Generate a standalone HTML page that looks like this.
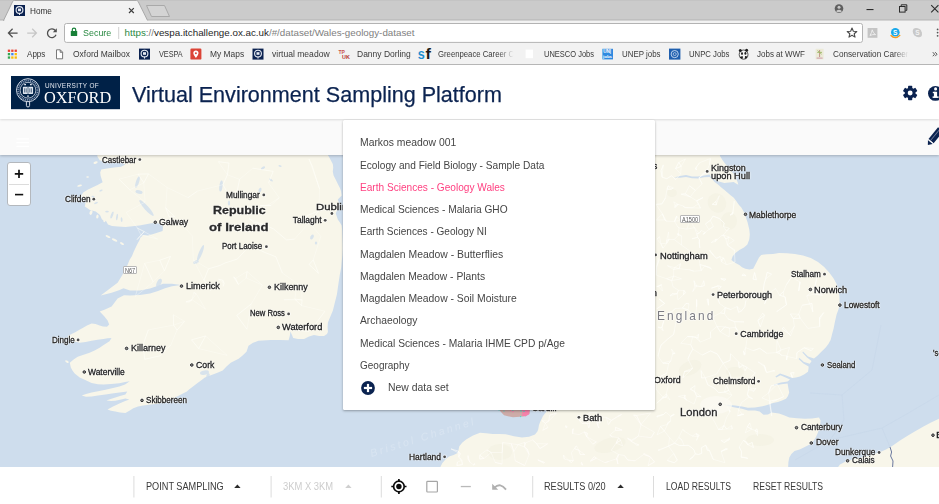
<!DOCTYPE html>
<html>
<head>
<meta charset="utf-8">
<title>Home</title>
<style>
*{box-sizing:border-box;margin:0;padding:0}
html,body{width:939px;height:504px;overflow:hidden;background:#fff;font-family:"Liberation Sans",sans-serif}
#root{position:relative;width:939px;height:504px;overflow:hidden}
.t{position:absolute;white-space:pre;line-height:1;transform-origin:0 0}
.a{position:absolute}
svg{position:absolute;overflow:visible}
</style>
</head>
<body>
<div id="root">
<svg width="939" height="312" viewBox="0 155 939 312" style="left:0;top:155px">
<rect x="0" y="155" width="939" height="312" fill="#cedded"/>
<g fill="#f8f6ea">
<path d="M96.5 150.0 L97.6 157.0 L100.0 160.6 L108.0 161.4 L116.0 162.2 L122.0 163.0 L125.4 164.6 L121.0 166.8 L114.0 167.6 L107.0 168.4 L101.3 169.4 L100.2 172.6 L100.6 175.8 L101.6 179.0 L102.6 182.3 L97.6 185.0 L92.3 187.4 L87.6 189.8 L83.2 192.6 L81.0 196.0 L85.8 201.6 L84.8 206.6 L90.0 210.0 L95.7 211.6 L100.0 215.0 L102.0 219.5 L106.0 221.0 L108.0 224.5 L112.0 226.0 L118.0 226.6 L125.5 227.0 L139.4 225.4 L150.0 223.6 L155.3 222.8 L160.0 223.8 L163.0 226.6 L162.6 231.0 L158.0 232.4 L153.3 234.0 L148.0 235.4 L143.4 235.0 L140.5 237.6 L139.3 240.5 L137.4 244.0 L135.7 247.6 L133.6 252.0 L132.0 256.0 L129.5 260.0 L127.5 264.9 L122.5 274.8 L117.6 282.7 L109.6 288.7 L100.7 295.6 L111.6 292.8 L119.0 290.2 L123.5 288.2 L130.0 290.6 L140.0 290.4 L150.0 288.6 L158.0 285.8 L163.0 283.8 L172.0 283.8 L181.0 285.0 L172.0 286.2 L165.0 288.2 L158.0 291.0 L150.0 293.4 L140.0 295.0 L130.0 295.4 L124.0 295.2 L117.6 298.6 L111.6 306.5 L105.0 309.5 L99.7 311.5 L104.0 316.0 L107.6 320.4 L109.2 324.6 L107.0 326.8 L103.0 326.6 L99.6 325.6 L95.6 324.0 L91.6 323.4 L87.0 325.6 L82.7 328.0 L79.0 330.0 L75.7 332.0 L71.6 334.0 L67.8 336.0 L68.6 338.4 L69.8 339.9 L74.6 341.6 L79.7 342.8 L85.6 341.9 L91.6 340.8 L97.6 339.8 L103.5 338.9 L107.6 338.2 L111.5 337.9 L109.5 341.2 L104.0 344.8 L99.6 347.8 L94.6 350.4 L89.6 352.8 L83.6 354.8 L77.7 356.7 L73.6 359.6 L69.8 362.7 L70.8 367.6 L72.6 370.8 L74.7 373.6 L79.7 377.6 L84.7 379.8 L91.6 383.0 L98.0 384.2 L103.5 384.4 L111.0 384.0 L119.4 383.2 L125.0 382.0 L129.8 381.2 L125.0 384.6 L119.4 386.6 L112.0 388.2 L105.5 389.7 L98.0 391.2 L91.6 392.6 L86.0 394.0 L81.7 395.6 L86.0 396.8 L91.6 396.6 L98.0 395.6 L105.5 394.6 L112.0 393.6 L119.4 392.6 L127.3 391.6 L125.4 394.4 L120.0 396.0 L115.4 397.4 L110.6 399.0 L106.5 400.6 L111.0 401.1 L115.4 400.7 L120.0 399.7 L125.4 398.4 L129.3 399.6 L124.0 401.6 L119.4 403.4 L113.0 406.4 L107.5 409.5 L111.0 410.8 L115.4 411.5 L120.0 412.4 L125.4 412.9 L129.4 410.8 L133.3 408.3 L138.0 406.4 L143.2 405.4 L151.0 404.6 L159.1 403.4 L167.0 400.6 L175.0 397.4 L181.0 394.6 L186.9 391.5 L189.0 389.5 L193.0 386.4 L196.9 383.5 L201.0 380.4 L204.9 377.6 L212.8 374.6 L218.0 372.6 L222.7 370.6 L226.5 366.4 L230.7 362.7 L238.6 358.7 L242.6 355.4 L246.5 351.8 L248.5 345.8 L253.0 342.8 L258.4 340.8 L270.4 339.9 L280.3 339.9 L288.6 340.3 L289.8 336.0 L290.4 331.6 L292.0 335.0 L293.2 337.9 L298.0 339.0 L304.1 338.9 L309.0 336.4 L314.0 334.9 L319.0 335.9 L324.0 335.9 L327.0 334.0 L327.9 331.9 L327.6 327.0 L327.9 322.4 L330.6 316.0 L332.9 310.5 L335.0 302.0 L336.9 294.6 L338.4 284.0 L339.8 274.8 L341.2 267.6 L341.8 260.9 L342.4 255.0 L342.7 248.0 L342.5 240.0 L342.2 231.0 L341.7 225.4 L339.6 222.0 L337.8 219.4 L335.8 213.5 L337.6 209.0 L339.8 205.6 L337.8 199.6 L341.7 195.6 L341.0 191.0 L339.8 187.7 L337.6 183.4 L335.8 179.8 L333.6 175.4 L332.8 171.8 L333.2 167.6 L332.8 163.9 L330.4 159.4 L327.9 155.0 L327.0 150.0 Z"/><path d="M719.5 150.0 L720.0 156.0 L722.4 160.0 L725.4 163.9 L729.4 168.6 L733.4 173.8 L736.0 178.4 L737.6 182.0 L738.3 184.8 L735.6 183.3 L733.8 182.0 L729.0 182.5 L724.2 183.0 L719.0 181.5 L714.6 179.7 L711.0 177.0 L709.6 174.6 L704.0 175.4 L698.0 176.6 L692.0 176.4 L686.0 175.0 L680.0 176.0 L674.0 177.6 L680.0 177.7 L686.0 176.9 L692.0 178.2 L698.0 178.4 L704.0 177.2 L709.6 176.9 L712.0 179.0 L714.6 181.9 L718.0 184.6 L721.0 187.2 L724.2 189.8 L727.4 192.5 L730.6 195.2 L733.8 197.8 L736.6 201.4 L739.0 205.0 L741.3 207.6 L743.6 211.6 L745.3 215.5 L747.6 222.4 L749.3 229.4 L749.8 234.4 L749.3 239.3 L747.4 244.6 L744.0 247.4 L739.4 250.0 L735.4 252.9 L732.6 256.4 L731.4 259.9 L735.0 262.8 L739.3 264.9 L742.0 267.2 L745.3 268.8 L749.4 269.4 L753.2 268.8 L755.4 264.6 L757.2 260.9 L759.0 257.4 L761.2 254.9 L767.0 254.2 L773.1 253.9 L779.0 252.9 L787.0 253.2 L794.9 253.9 L803.0 255.6 L810.8 257.9 L818.0 262.0 L823.9 266.8 L829.2 272.6 L833.8 278.7 L836.8 284.6 L838.6 290.7 L839.4 296.6 L839.6 302.6 L838.8 308.6 L836.6 314.5 L835.0 321.4 L833.6 328.4 L832.0 334.4 L830.6 340.0 L828.4 344.0 L825.5 347.7 L821.6 351.6 L817.7 355.5 L814.0 358.6 L808.0 356.4 L803.0 351.6 L802.4 352.6 L807.0 357.6 L811.6 361.0 L809.8 363.8 L804.0 362.0 L799.4 358.0 L798.6 359.0 L803.4 363.4 L808.6 366.4 L808.6 368.0 L808.0 371.7 L804.0 374.6 L800.0 376.5 L796.0 377.4 L792.4 378.0 L786.0 375.6 L780.0 373.4 L775.4 376.4 L776.2 377.6 L780.4 375.2 L785.6 377.6 L790.0 379.6 L787.6 381.6 L781.0 382.6 L774.0 384.4 L774.4 385.6 L781.4 384.2 L787.6 383.6 L788.0 386.0 L789.2 392.4 L788.0 396.0 L786.0 398.7 L782.0 400.6 L778.0 401.9 L773.0 403.0 L768.7 404.5 L764.6 405.8 L761.0 406.4 L755.0 407.6 L748.0 407.8 L742.0 406.4 L735.0 405.4 L728.0 404.8 L722.0 404.6 L728.0 406.0 L735.0 407.4 L742.0 408.8 L748.0 410.4 L755.0 410.6 L759.6 411.6 L763.5 414.8 L768.0 414.4 L771.6 412.6 L779.0 413.5 L784.0 415.2 L789.3 417.4 L797.0 418.2 L804.8 418.7 L812.0 418.6 L819.0 417.4 L820.6 420.4 L820.3 423.9 L819.4 428.4 L817.7 432.9 L816.0 437.0 L813.8 440.6 L809.6 444.4 L804.8 447.1 L799.6 449.4 L794.5 451.0 L791.4 454.0 L789.3 457.4 L788.4 462.0 L788.0 470.0 L440.0 470.0 L440.5 466.7 L442.2 463.3 L445.4 459.6 L449.1 456.5 L453.6 455.0 L457.6 453.0 L458.6 449.6 L459.3 446.2 L462.4 442.4 L466.1 439.4 L473.0 435.6 L480.0 432.8 L486.0 433.2 L492.8 433.9 L499.0 434.0 L505.6 434.2 L514.0 436.2 L522.0 437.6 L529.0 436.8 L535.0 434.5 L537.4 431.6 L538.2 429.4 L539.0 425.0 L540.2 421.7 L543.0 416.0 L546.5 411.5 L548.0 405.0 L548.0 300.0 L600.0 150.0 Z"/><path d="M939.0 418.7 L931.0 422.4 L923.5 426.5 L915.6 431.0 L908.0 435.5 L900.0 440.6 L892.5 445.8 L886.0 449.4 L879.6 452.3 L870.6 455.2 L861.6 457.4 L853.6 459.2 L846.1 461.3 L840.0 464.4 L835.8 470.0 L945.0 470.0 L945.0 418.0 Z"/><ellipse cx="108" cy="236.6" rx="2.6" ry="1" transform="rotate(25 108 236.6)"/><ellipse cx="114.6" cy="240" rx="3" ry="1.1" transform="rotate(25 114.6 240)"/><ellipse cx="122" cy="243.6" rx="2.2" ry="1" transform="rotate(30 122 243.6)"/><ellipse cx="95.6" cy="162.6" rx="2.2" ry="1.2" transform="rotate(-20 95.6 162.6)"/><ellipse cx="87.6" cy="177" rx="1.4" ry="0.8" transform="rotate(0 87.6 177)"/><ellipse cx="79.6" cy="185.6" rx="2.4" ry="1" transform="rotate(-15 79.6 185.6)"/><ellipse cx="67" cy="361.6" rx="2" ry="1" transform="rotate(30 67 361.6)"/><ellipse cx="60.4" cy="342" rx="1.2" ry="0.8" transform="rotate(0 60.4 342)"/><ellipse cx="75.6" cy="199" rx="2.6" ry="1.2" transform="rotate(10 75.6 199)"/><ellipse cx="91" cy="212.6" rx="1.4" ry="2.4" transform="rotate(20 91 212.6)"/><ellipse cx="97.4" cy="216.6" rx="1.2" ry="2" transform="rotate(10 97.4 216.6)"/><ellipse cx="104.4" cy="220.4" rx="1.1" ry="1.8" transform="rotate(0 104.4 220.4)"/>
</g>
<g fill="#efeedd" opacity=".35">
<ellipse cx="717" cy="203" rx="9" ry="10" transform="rotate(-30 717 203)"/><ellipse cx="729" cy="221" rx="8" ry="9"/><ellipse cx="672" cy="193" rx="5" ry="4"/>
<ellipse cx="690" cy="368" rx="12" ry="7" transform="rotate(-25 690 368)"/><ellipse cx="735" cy="372" rx="9" ry="5"/><ellipse cx="610" cy="445" rx="16" ry="7" transform="rotate(-15 610 445)"/><ellipse cx="500" cy="452" rx="12" ry="8"/><ellipse cx="760" cy="440" rx="14" ry="6"/>
</g>
<g fill="#cedded" opacity=".75"><ellipse cx="146.5" cy="208" rx="2.1" ry="10.5" transform="rotate(-42 146.5 208)"/><ellipse cx="139" cy="192" rx="3.6" ry="1.8" transform="rotate(10 139 192)"/><ellipse cx="137.5" cy="182" rx="1.6" ry="6" transform="rotate(18 137.5 182)"/><ellipse cx="200.5" cy="253" rx="1.7" ry="8.5" transform="rotate(22 200.5 253)"/><ellipse cx="196" cy="262" rx="3" ry="1.6" transform="rotate(-20 196 262)"/><ellipse cx="221" cy="186" rx="1.6" ry="5.5" transform="rotate(8 221 186)"/><ellipse cx="229" cy="203" rx="1.1" ry="2.6" transform="rotate(0 229 203)"/><ellipse cx="263" cy="168" rx="2.4" ry="1.2" transform="rotate(-30 263 168)"/><ellipse cx="271" cy="180" rx="2.2" ry="1" transform="rotate(35 271 180)"/><ellipse cx="280" cy="166" rx="1.6" ry="0.9" transform="rotate(20 280 166)"/><ellipse cx="260" cy="190" rx="1.4" ry="2.4" transform="rotate(20 260 190)"/><ellipse cx="127.5" cy="349" rx="2" ry="1" transform="rotate(0 127.5 349)"/><ellipse cx="312" cy="237" rx="1.6" ry="2.6" transform="rotate(30 312 237)"/><ellipse cx="316" cy="243" rx="1.2" ry="1.6" transform="rotate(0 316 243)"/><ellipse cx="159" cy="283" rx="2.2" ry="4.6" transform="rotate(25 159 283)"/><ellipse cx="204.5" cy="372.6" rx="4.6" ry="2.2" transform="rotate(-12 204.5 372.6)"/><ellipse cx="208" cy="375.6" rx="1.6" ry="2.6" transform="rotate(20 208 375.6)"/><ellipse cx="112" cy="215" rx="1.1" ry="3.6" transform="rotate(20 112 215)"/><ellipse cx="117" cy="217" rx="0.9" ry="3.2" transform="rotate(10 117 217)"/><ellipse cx="121.6" cy="219.6" rx="0.9" ry="2.4" transform="rotate(-5 121.6 219.6)"/><ellipse cx="107" cy="211.6" rx="1.8" ry="0.9" transform="rotate(0 107 211.6)"/><ellipse cx="96" cy="203" rx="2" ry="0.9" transform="rotate(-20 96 203)"/><ellipse cx="93" cy="196.6" rx="1.6" ry="0.8" transform="rotate(10 93 196.6)"/><ellipse cx="101" cy="190.6" rx="1.8" ry="0.8" transform="rotate(-25 101 190.6)"/></g>
<path d="M497.0 400.0 L532.0 400.0 L530.0 409.6 L529.4 414.0 L523.5 416.4 L513.0 417.3 L504.0 415.3 L499.4 410.2 Z" fill="#cdaba8"/>
<path d="M521.6 410 L529.6 410 L529.2 414.2 L525.4 416.4 L521.8 415.6 L522.6 412.6 Z" fill="#f482ab"/><circle cx="513" cy="411.6" r="0.9" fill="#f482ab"/><circle cx="510.6" cy="410.8" r="0.7" fill="#f482ab"/>
<g fill="#45dccf"><circle cx="521" cy="411" r="0.7"/><circle cx="524" cy="411.4" r="0.7"/><circle cx="520.6" cy="416.6" r="0.7"/><circle cx="504" cy="411" r="0.6"/><circle cx="512.8" cy="410" r="0.7"/><circle cx="499" cy="410" r="0.6"/></g>
<path d="M712.3 204.3 L716.3 204.9 M712.3 204.3 L716.0 201.5 M666.1 313.8 L672.8 311.0 M666.1 313.8 L663.7 321.2 M662.5 291.1 L658.3 286.5 M662.5 291.1 L661.4 284.8 M668.2 185.8 L667.0 189.1 M668.2 185.8 L670.9 189.4 M729.9 411.8 L729.7 409.9 M729.9 411.8 L727.5 407.2 M677.5 226.5 L679.0 227.8 M677.5 226.5 L674.6 221.4 M756.4 279.8 L753.0 279.1 M756.4 279.8 L754.6 272.5 M681.1 194.2 L685.2 193.9 M681.1 194.2 L690.3 196.9 M709.7 408.6 L713.9 403.9 M709.7 408.6 L711.0 416.0 M687.4 336.6 L692.7 336.5 M687.4 336.6 L695.0 337.2 M767.2 272.3 L771.6 274.2 M767.2 272.3 L765.6 279.0 M666.4 221.2 L664.8 219.9 M666.4 221.2 L674.6 221.4 M774.4 289.3 L775.7 288.6 M774.4 289.3 L768.3 294.2 M710.7 337.8 L710.4 331.9 M710.7 337.8 L700.4 342.0 M734.9 250.0 L734.4 250.7 M734.9 250.0 L727.3 245.0 M794.2 372.6 L790.7 372.9 M794.2 372.6 L792.1 376.9 M698.5 334.3 L697.9 338.0 M698.5 334.3 L695.0 337.2 M747.4 426.7 L749.9 422.9 M747.4 426.7 L751.6 429.2 M728.8 390.4 L724.3 392.1 M728.8 390.4 L726.4 385.5 M682.4 308.1 L688.1 309.8 M682.4 308.1 L686.0 303.4 M662.8 363.1 L668.7 363.5 M662.8 363.1 L670.8 360.8 M789.0 333.9 L790.6 335.8 M789.0 333.9 L782.2 328.8 M777.0 340.5 L781.0 350.0 M777.0 340.5 L776.5 352.6 M756.9 298.1 L752.4 293.2 M756.9 298.1 L752.4 291.9 M738.5 361.9 L742.7 365.1 M738.5 361.9 L739.3 367.9 M666.6 373.4 L661.6 375.8 M666.6 373.4 L668.7 363.5 M723.1 363.3 L730.1 360.3 M723.1 363.3 L717.4 354.1 M659.9 299.7 L659.0 298.9 M659.9 299.7 L664.6 303.4 M685.2 193.9 L681.1 194.2 M685.2 193.9 L690.3 196.9 M666.3 393.8 L666.2 397.1 M666.3 393.8 L662.9 397.2 M678.5 234.0 L677.4 233.8 M678.5 234.0 L678.3 235.3 M724.0 425.5 L722.0 429.4 M724.0 425.5 L726.7 429.0 M670.0 295.9 L672.0 293.7 M670.0 295.9 L677.2 293.7 M751.6 429.2 L755.1 430.4 M751.6 429.2 L747.4 426.7 M704.4 285.5 L701.1 286.6 M704.4 285.5 L703.7 280.7 M718.4 429.4 L722.0 429.4 M718.4 429.4 L724.0 425.5 M686.7 229.2 L679.0 227.8 M686.7 229.2 L694.4 227.6 M696.6 306.9 L696.7 303.9 M696.6 306.9 L696.6 299.5 M656.7 286.6 L658.3 286.5 M656.7 286.6 L661.4 284.8 M720.3 331.9 L717.0 326.4 M720.3 331.9 L724.8 326.9 M745.7 347.6 L743.6 351.3 M745.7 347.6 L745.1 354.3 M724.3 280.5 L725.8 279.1 M724.3 280.5 L720.8 278.6 M674.0 352.7 L675.1 353.4 M674.0 352.7 L672.7 353.9 M666.8 178.7 L662.1 177.2 M666.8 178.7 L671.6 175.7 M692.3 207.8 L685.1 207.6 M692.3 207.8 L698.4 203.8 M656.0 204.4 L661.9 203.9 M656.0 204.4 L662.4 213.9 M673.7 269.6 L674.5 267.6 M673.7 269.6 L679.2 268.7 M660.4 426.4 L664.4 431.0 M660.4 426.4 L667.5 424.4 M699.9 264.6 L704.7 265.9 M699.9 264.6 L701.4 270.6 M719.4 195.7 L716.0 201.5 M719.4 195.7 L716.3 204.9 M737.1 306.5 L738.6 312.3 M737.1 306.5 L741.5 310.9 M670.9 189.4 L673.4 188.0 M670.9 189.4 L667.0 189.1 M715.6 239.3 L717.3 239.4 M715.6 239.3 L715.0 241.6 M660.0 450.0 L658.0 450.2 M660.0 450.0 L668.6 446.1 M747.9 458.4 L744.1 457.3 M747.9 458.4 L741.2 457.2 M701.4 270.6 L704.7 265.9 M701.4 270.6 L699.9 264.6 M685.1 395.0 L684.0 398.0 M685.1 395.0 L685.4 399.0 M748.7 397.2 L747.4 394.6 M748.7 397.2 L752.6 398.8 M713.4 226.5 L708.9 229.5 M713.4 226.5 L710.3 220.4 M695.5 316.9 L691.0 313.0 M695.5 316.9 L696.6 306.9 M660.9 243.8 L663.0 248.2 M660.9 243.8 L666.8 243.2 M701.1 370.6 L701.6 378.0 M701.1 370.6 L705.2 377.7 M822.4 295.3 L814.8 294.1 M822.4 295.3 L814.0 290.0 M694.4 227.6 L696.8 233.8 M694.4 227.6 L699.1 233.3 M690.2 220.7 L694.4 227.6 M690.2 220.7 L686.7 229.2 M802.2 305.2 L809.8 303.9 M802.2 305.2 L798.7 314.2 M769.6 403.5 L769.9 401.1 M769.6 403.5 L777.3 399.6 M670.8 360.8 L668.7 363.5 M670.8 360.8 L672.7 353.9 M786.5 304.8 L785.7 300.8 M786.5 304.8 L785.1 296.9 M687.1 400.3 L685.4 399.0 M687.1 400.3 L684.0 398.0 M713.9 403.9 L709.7 408.6 M713.9 403.9 L719.2 409.0 M725.8 448.7 L727.4 449.0 M725.8 448.7 L721.0 451.5 M678.1 204.4 L675.0 205.4 M678.1 204.4 L675.0 207.6 M681.4 411.7 L680.4 413.2 M681.4 411.7 L683.0 416.8 M717.0 326.4 L720.3 331.9 M717.0 326.4 L724.8 326.9 M678.8 162.4 L681.2 166.3 M678.8 162.4 L675.5 168.6 M747.6 444.6 L746.7 442.1 M747.6 444.6 L752.2 442.5 M731.5 425.6 L732.3 429.0 M731.5 425.6 L726.7 429.0 M699.8 247.9 L699.2 243.0 M699.8 247.9 L699.4 239.6 M697.9 338.0 L695.0 337.2 M697.9 338.0 L698.5 334.3 M701.1 286.6 L704.4 285.5 M701.1 286.6 L696.8 286.0 M678.8 437.4 L682.0 440.2 M678.8 437.4 L674.6 443.2 M717.6 298.7 L719.7 303.7 M717.6 298.7 L725.6 294.9 M757.5 435.6 L757.6 432.1 M757.5 435.6 L755.1 430.4 M729.2 439.7 L729.5 437.8 M729.2 439.7 L724.1 442.5 M743.3 321.3 L743.5 322.3 M743.3 321.3 L734.7 321.7 M732.6 214.2 L733.0 212.3 M732.6 214.2 L730.1 215.1 M656.7 403.3 L662.9 398.2 M656.7 403.3 L662.9 397.2 M686.0 303.4 L689.0 303.8 M686.0 303.4 L682.4 308.1 M782.2 328.8 L783.6 327.2 M782.2 328.8 L789.0 333.9 M712.7 317.1 L720.5 312.9 M712.7 317.1 L717.0 326.4 M752.6 398.8 L748.7 397.2 M752.6 398.8 L747.4 394.6 M674.5 330.0 L673.6 334.4 M674.5 330.0 L676.0 320.9 M699.2 243.0 L699.4 239.6 M699.2 243.0 L699.8 247.9 M790.4 313.9 L793.2 318.6 M790.4 313.9 L798.7 314.2 M753.7 391.3 L755.9 388.0 M753.7 391.3 L748.5 389.6 M814.8 294.1 L814.0 290.0 M814.8 294.1 L822.4 295.3 M762.6 313.2 L764.6 315.3 M762.6 313.2 L757.9 320.5 M745.1 370.7 L746.9 367.4 M745.1 370.7 L742.7 365.1 M734.7 321.7 L735.6 327.3 M734.7 321.7 L728.0 318.9 M739.2 447.0 L741.6 451.7 M739.2 447.0 L743.4 440.4 M753.4 447.6 L752.2 442.5 M753.4 447.6 L747.6 444.6 M677.2 293.7 L678.4 290.2 M677.2 293.7 L672.0 293.7 M668.6 231.9 L669.0 239.5 M668.6 231.9 L666.6 240.5 M668.7 363.5 L670.8 360.8 M668.7 363.5 L662.8 363.1 M682.9 377.8 L684.5 371.5 M682.9 377.8 L690.3 370.7 M694.2 450.4 L692.5 448.3 M694.2 450.4 L695.3 453.9 M725.3 307.6 L730.8 309.5 M725.3 307.6 L724.4 313.6 M684.1 290.5 L685.5 292.7 M684.1 290.5 L683.4 294.9 M690.1 255.8 L689.3 250.6 M690.1 255.8 L699.1 258.3 M752.4 293.2 L752.4 291.9 M752.4 293.2 L756.9 298.1 M659.1 259.8 L658.0 258.5 M659.1 259.8 L656.5 267.0 M764.6 315.3 L762.6 313.2 M764.6 315.3 L757.9 320.5 M667.2 460.4 L674.2 462.8 M667.2 460.4 L673.7 453.5 M674.2 239.5 L669.0 239.5 M674.2 239.5 L678.3 235.3 M662.9 397.2 L662.9 398.2 M662.9 397.2 L666.2 397.1 M703.1 197.8 L702.6 197.7 M703.1 197.8 L696.7 200.8 M729.5 437.8 L729.2 439.7 M729.5 437.8 L724.1 442.5 M682.0 440.2 L678.8 437.4 M682.0 440.2 L684.1 445.5 M755.3 373.0 L750.1 378.2 M755.3 373.0 L746.9 367.4 M671.6 175.7 L675.5 179.6 M671.6 175.7 L666.8 178.7 M775.7 288.6 L774.4 289.3 M775.7 288.6 L779.5 295.2 M668.6 446.1 L674.6 443.2 M668.6 446.1 L669.5 437.6 M670.6 420.9 L667.6 422.9 M670.6 420.9 L670.7 416.3 M667.6 422.9 L667.5 424.4 M667.6 422.9 L670.6 420.9 M735.0 262.1 L726.4 264.7 M735.0 262.1 L734.4 250.7 M752.2 442.5 L747.6 444.6 M752.2 442.5 L753.4 447.6 M702.6 197.7 L703.1 197.8 M702.6 197.7 L696.7 200.8 M675.0 207.6 L675.0 205.4 M675.0 207.6 L678.1 204.4 M664.8 219.9 L666.4 221.2 M664.8 219.9 L662.4 213.9 M710.3 251.6 L709.8 250.2 M710.3 251.6 L713.6 255.3 M699.6 162.7 L696.0 167.6 M699.6 162.7 L695.5 168.5 M783.6 327.2 L782.2 328.8 M783.6 327.2 L789.0 333.9 M689.0 303.8 L686.0 303.4 M689.0 303.8 L688.1 309.8 M798.5 290.7 L799.0 290.8 M798.5 290.7 L800.0 281.9 M742.1 414.2 L743.8 414.3 M742.1 414.2 L737.7 415.8 M724.4 313.6 L720.5 312.9 M724.4 313.6 L725.3 307.6 M715.6 413.5 L716.4 413.4 M715.6 413.5 L718.1 410.2 M779.0 353.2 L776.5 352.6 M779.0 353.2 L782.0 355.5 M726.4 264.7 L721.6 261.8 M726.4 264.7 L723.8 258.1 M665.5 197.9 L661.9 203.9 M665.5 197.9 L667.0 189.1 M668.3 385.5 L666.3 393.8 M668.3 385.5 L661.6 375.8 M700.5 208.1 L698.4 203.8 M700.5 208.1 L692.3 207.8 M670.7 416.3 L673.7 414.2 M670.7 416.3 L674.3 414.6 M705.1 232.4 L704.9 233.2 M705.1 232.4 L703.2 234.3 M707.0 299.1 L708.5 299.4 M707.0 299.1 L708.5 305.2 M683.4 294.9 L685.5 292.7 M683.4 294.9 L684.1 290.5 M701.8 453.3 L698.5 454.5 M701.8 453.3 L701.3 447.8 M698.5 454.5 L695.3 453.9 M698.5 454.5 L701.8 453.3 M709.9 267.5 L711.6 269.1 M709.9 267.5 L704.7 265.9 M656.2 275.2 L656.5 267.0 M656.2 275.2 L666.5 278.7 M738.6 312.3 L741.5 310.9 M738.6 312.3 L737.1 306.5 M691.0 313.0 L688.1 309.8 M691.0 313.0 L695.5 316.9 M656.9 239.1 L659.6 236.8 M656.9 239.1 L660.9 243.8 M671.6 280.6 L673.7 276.0 M671.6 280.6 L666.5 278.7 M663.3 164.9 L661.0 170.8 M663.3 164.9 L662.1 177.2 M708.9 229.5 L705.1 232.4 M708.9 229.5 L713.4 226.5 M757.9 320.5 L760.3 326.9 M757.9 320.5 L764.6 315.3 M786.6 359.9 L787.0 356.4 M786.6 359.9 L787.0 355.9 M723.8 258.1 L721.1 259.8 M723.8 258.1 L720.0 256.5 M782.0 355.5 L779.0 353.2 M782.0 355.5 L787.0 355.9 M663.6 414.4 L665.9 412.2 M663.6 414.4 L657.1 416.1 M811.2 350.6 L813.3 348.4 M811.2 350.6 L804.1 347.8 M680.2 318.8 L680.7 318.9 M680.2 318.8 L676.0 320.9 M743.8 414.3 L742.1 414.2 M743.8 414.3 L737.7 415.8 M757.6 432.1 L755.1 430.4 M757.6 432.1 L756.9 428.9 M774.8 370.9 L772.9 370.5 M774.8 370.9 L766.7 372.5 M696.0 167.6 L695.5 168.5 M696.0 167.6 L696.4 169.9 M679.2 268.7 L674.5 267.6 M679.2 268.7 L680.5 263.6 M674.3 414.6 L673.7 414.2 M674.3 414.6 L670.7 416.3 M753.2 350.7 L759.7 348.3 M753.2 350.7 L745.7 347.6 M765.0 367.0 L763.9 365.0 M765.0 367.0 L765.7 370.7 M743.5 322.3 L743.3 321.3 M743.5 322.3 L734.7 321.7 M669.0 239.5 L666.6 240.5 M669.0 239.5 L666.8 243.2 M741.9 275.4 L743.7 274.0 M741.9 275.4 L746.1 275.8 M739.3 367.9 L742.7 365.1 M739.3 367.9 L738.5 361.9 M789.5 347.4 L787.0 355.9 M789.5 347.4 L781.0 350.0 M681.7 236.0 L678.3 235.3 M681.7 236.0 L678.5 234.0 M666.6 240.5 L669.0 239.5 M666.6 240.5 L666.8 243.2 M772.9 370.5 L774.8 370.9 M772.9 370.5 L766.7 372.5 M745.9 300.7 L744.8 306.8 M745.9 300.7 L752.4 293.2 M659.0 298.9 L659.9 299.7 M659.0 298.9 L664.6 303.4 M734.2 240.5 L729.1 237.0 M734.2 240.5 L727.3 245.0 M692.5 448.3 L694.2 450.4 M692.5 448.3 L688.3 445.3 M692.7 336.5 L695.0 337.2 M692.7 336.5 L687.4 336.6 M680.7 318.9 L680.2 318.8 M680.7 318.9 L676.0 320.9 M798.7 314.2 L800.2 318.2 M798.7 314.2 L793.2 318.6 M696.3 433.6 L697.6 436.6 M696.3 433.6 L699.2 435.4 M656.6 309.0 L656.8 308.7 M656.6 309.0 L664.6 303.4 M734.4 250.7 L734.9 250.0 M734.4 250.7 L727.3 245.0 M680.5 263.6 L679.2 268.7 M680.5 263.6 L674.5 267.6 M711.0 416.0 L715.6 413.5 M711.0 416.0 L716.4 413.4 M656.3 388.5 L656.7 390.0 M656.3 388.5 L656.5 379.6 M720.8 278.6 L724.3 280.5 M720.8 278.6 L725.8 279.1 M718.8 289.4 L718.1 285.8 M718.8 289.4 L721.2 286.6 M703.9 172.8 L705.8 173.0 M703.9 172.8 L699.0 177.9 M673.7 414.2 L674.3 414.6 M673.7 414.2 L670.7 416.3 M705.7 445.2 L701.3 447.8 M705.7 445.2 L707.3 450.2 M699.4 239.6 L697.6 237.3 M699.4 239.6 L699.2 243.0 M721.0 451.5 L725.8 448.7 M721.0 451.5 L727.4 449.0 M819.7 326.6 L819.5 319.8 M819.7 326.6 L819.7 317.4 M783.4 296.4 L785.1 296.9 M783.4 296.4 L779.5 295.2 M787.0 355.9 L787.0 356.4 M787.0 355.9 L786.6 359.9 M705.8 173.0 L703.9 172.8 M705.8 173.0 L699.0 177.9 M707.8 384.9 L714.4 388.1 M707.8 384.9 L705.2 377.7 M753.0 279.1 L756.4 279.8 M753.0 279.1 L754.6 272.5 M685.1 207.6 L682.9 205.9 M685.1 207.6 L692.3 207.8 M692.2 436.1 L696.3 433.6 M692.2 436.1 L697.6 436.6 M734.3 200.9 L733.0 212.3 M734.3 200.9 L732.6 214.2 M689.5 185.8 L695.3 190.3 M689.5 185.8 L685.2 193.9 M697.6 237.3 L699.4 239.6 M697.6 237.3 L696.8 233.8 M755.1 430.4 L756.9 428.9 M755.1 430.4 L757.6 432.1 M786.4 284.7 L783.6 291.5 M786.4 284.7 L791.4 277.3 M728.0 318.9 L724.4 313.6 M728.0 318.9 L734.7 321.7 M721.6 261.8 L721.1 259.8 M721.6 261.8 L723.8 258.1 M666.8 243.2 L666.6 240.5 M666.8 243.2 L669.0 239.5 M743.6 351.3 L745.1 354.3 M743.6 351.3 L744.2 355.0 M703.2 234.3 L704.9 233.2 M703.2 234.3 L705.1 232.4 M725.6 294.9 L729.7 297.7 M725.6 294.9 L733.7 292.6 M661.6 375.8 L666.6 373.4 M661.6 375.8 L656.5 379.6 M811.9 303.3 L809.8 303.9 M811.9 303.3 L812.8 311.9 M724.1 442.5 L720.9 440.3 M724.1 442.5 L729.2 439.7 M675.0 205.4 L675.0 207.6 M675.0 205.4 L678.1 204.4 M746.9 367.4 L745.1 370.7 M746.9 367.4 L742.7 365.1 M768.6 392.8 L771.2 385.8 M768.6 392.8 L769.9 401.1 M735.6 327.3 L737.6 330.6 M735.6 327.3 L737.4 330.7 M662.9 398.2 L662.9 397.2 M662.9 398.2 L666.2 397.1 M696.5 440.4 L697.6 436.6 M696.5 440.4 L699.2 435.4 M678.3 235.3 L678.5 234.0 M678.3 235.3 L677.4 233.8 M766.7 372.5 L765.7 370.7 M766.7 372.5 L765.0 367.0 M675.5 179.6 L671.6 175.7 M675.5 179.6 L680.7 173.9 M747.3 336.9 L745.7 347.6 M747.3 336.9 L737.6 330.6 M723.5 226.6 L724.2 223.1 M723.5 226.6 L726.6 231.0 M708.5 299.4 L707.0 299.1 M708.5 299.4 L708.5 305.2 M809.8 303.9 L811.9 303.3 M809.8 303.9 L802.2 305.2 M696.8 233.8 L699.1 233.3 M696.8 233.8 L697.6 237.3 M709.5 164.7 L710.4 158.5 M709.5 164.7 L705.8 173.0 M742.7 365.1 L739.3 367.9 M742.7 365.1 L746.9 367.4 M729.1 237.0 L725.9 239.1 M729.1 237.0 L723.3 235.1 M695.5 168.5 L696.0 167.6 M695.5 168.5 L696.4 169.9 M714.8 287.1 L711.5 288.1 M714.8 287.1 L718.1 285.8 M694.5 391.5 L690.3 389.1 M694.5 391.5 L696.7 396.3 M707.3 450.2 L709.5 450.6 M707.3 450.2 L705.7 445.2 M694.9 286.0 L696.8 286.0 M694.9 286.0 L694.0 280.7 M681.5 278.8 L673.7 276.0 M681.5 278.8 L671.6 280.6 M693.1 457.1 L695.3 453.9 M693.1 457.1 L689.7 459.4 M680.7 173.9 L675.5 168.6 M680.7 173.9 L681.2 166.3 M666.5 278.7 L671.6 280.6 M666.5 278.7 L673.7 276.0 M688.3 445.3 L684.1 445.5 M688.3 445.3 L692.5 448.3 M771.6 274.2 L767.2 272.3 M771.6 274.2 L765.6 279.0 M721.1 259.8 L721.6 261.8 M721.1 259.8 L723.8 258.1 M685.5 158.9 L678.8 162.4 M685.5 158.9 L681.2 166.3 M704.7 265.9 L699.9 264.6 M704.7 265.9 L709.9 267.5 M718.1 410.2 L719.2 409.0 M718.1 410.2 L716.4 413.4 M799.0 290.8 L798.5 290.7 M799.0 290.8 L800.0 281.9 M664.6 303.4 L659.9 299.7 M664.6 303.4 L659.0 298.9 M720.9 440.3 L724.1 442.5 M720.9 440.3 L729.2 439.7 M689.6 269.8 L693.9 271.2 M689.6 269.8 L679.2 268.7 M727.5 407.2 L729.7 409.9 M727.5 407.2 L729.9 411.8 M662.1 177.2 L666.8 178.7 M662.1 177.2 L661.0 170.8 M715.0 241.6 L715.6 239.3 M715.0 241.6 L717.3 239.4 M701.6 378.0 L705.2 377.7 M701.6 378.0 L701.1 370.6 M711.1 242.6 L715.0 241.6 M711.1 242.6 L715.6 239.3 M656.7 390.0 L656.3 388.5 M656.7 390.0 L662.9 397.2 M696.7 303.9 L696.6 306.9 M696.7 303.9 L696.6 299.5 M723.3 235.1 L721.4 235.8 M723.3 235.1 L725.9 239.1 M730.8 309.5 L725.3 307.6 M730.8 309.5 L737.1 306.5 M711.6 269.1 L709.9 267.5 M711.6 269.1 L704.7 265.9 M690.3 389.1 L694.5 391.5 M690.3 389.1 L695.1 385.6 M699.0 177.9 L702.1 183.8 M699.0 177.9 L703.9 172.8 M661.9 327.6 L662.6 324.8 M661.9 327.6 L663.2 330.6 M712.7 458.9 L713.5 459.4 M712.7 458.9 L709.5 450.6 M702.1 183.8 L699.0 177.9 M702.1 183.8 L695.3 190.3 M672.8 311.0 L674.9 308.6 M672.8 311.0 L666.1 313.8 M779.5 295.2 L783.4 296.4 M779.5 295.2 L783.6 291.5 M696.8 286.0 L694.9 286.0 M696.8 286.0 L701.1 286.6 M763.9 365.0 L765.0 367.0 M763.9 365.0 L765.7 370.7 M754.6 272.5 L753.0 279.1 M754.6 272.5 L756.4 279.8 M699.1 233.3 L696.8 233.8 M699.1 233.3 L701.3 230.5 M682.7 429.4 L685.2 431.6 M682.7 429.4 L678.8 437.4 M724.9 462.7 L721.0 451.5 M724.9 462.7 L713.5 459.4 M796.7 358.6 L796.9 352.7 M796.7 358.6 L787.0 356.4 M738.6 409.5 L742.1 414.2 M738.6 409.5 L737.7 415.8 M663.0 248.2 L660.9 243.8 M663.0 248.2 L666.8 243.2 M676.7 216.2 L674.6 221.2 M676.7 216.2 L674.6 221.4 M817.9 272.3 L817.2 277.1 M817.9 272.3 L814.0 290.0 M806.7 295.9 L814.8 294.1 M806.7 295.9 L809.8 303.9 M701.2 396.8 L696.7 396.3 M701.2 396.8 L694.5 391.5 M759.7 348.3 L753.2 350.7 M759.7 348.3 L766.8 353.3 M693.9 271.2 L689.6 269.8 M693.9 271.2 L701.4 270.6 M680.6 220.6 L676.7 216.2 M680.6 220.6 L674.6 221.2 M700.4 342.0 L697.9 338.0 M700.4 342.0 L695.0 337.2 M658.0 258.5 L659.1 259.8 M658.0 258.5 L656.5 267.0 M710.3 220.4 L713.1 216.1 M710.3 220.4 L705.4 223.9 M794.4 326.2 L793.2 318.6 M794.4 326.2 L789.0 333.9 M667.0 189.1 L668.2 185.8 M667.0 189.1 L670.9 189.4 M724.8 326.9 L729.5 328.1 M724.8 326.9 L720.3 331.9 M684.5 371.5 L690.3 370.7 M684.5 371.5 L682.9 377.8 M727.3 245.0 L725.9 239.1 M727.3 245.0 L729.1 237.0 M709.5 450.6 L707.3 450.2 M709.5 450.6 L705.7 445.2 M710.4 331.9 L710.7 337.8 M710.4 331.9 L717.0 326.4 M718.1 285.8 L721.2 286.6 M718.1 285.8 L714.8 287.1 M719.3 218.5 L713.1 216.1 M719.3 218.5 L724.2 223.1 M657.0 434.8 L664.4 431.0 M657.0 434.8 L660.4 426.4 M729.7 409.9 L729.9 411.8 M729.7 409.9 L727.5 407.2 M726.7 429.0 L724.0 425.5 M726.7 429.0 L722.0 429.4 M658.6 327.3 L658.1 327.1 M658.6 327.3 L661.9 327.6 M671.5 349.0 L674.0 352.7 M671.5 349.0 L672.7 353.9 M720.5 312.9 L724.4 313.6 M720.5 312.9 L725.3 307.6 M681.4 245.0 L674.2 239.5 M681.4 245.0 L681.7 236.0 M746.7 442.1 L747.6 444.6 M746.7 442.1 L743.4 440.4 M674.9 308.6 L672.8 311.0 M674.9 308.6 L682.4 308.1 M690.3 196.9 L685.2 193.9 M690.3 196.9 L696.7 200.8 M817.2 277.1 L817.9 272.3 M817.2 277.1 L814.0 290.0 M813.3 348.4 L811.2 350.6 M813.3 348.4 L804.1 347.8 M726.4 417.8 L729.9 411.8 M726.4 417.8 L724.0 425.5 M694.0 280.7 L694.9 286.0 M694.0 280.7 L696.8 286.0 M746.1 275.8 L743.7 274.0 M746.1 275.8 L741.9 275.4 M677.4 233.8 L678.5 234.0 M677.4 233.8 L678.3 235.3 M663.2 330.6 L661.9 327.6 M663.2 330.6 L658.6 327.3 M760.3 326.9 L757.9 320.5 M760.3 326.9 L764.6 315.3 M729.1 336.9 L729.5 328.1 M729.1 336.9 L720.3 331.9 M730.1 360.3 L730.6 353.7 M730.1 360.3 L723.1 363.3 M733.7 292.6 L729.7 297.7 M733.7 292.6 L725.6 294.9 M660.1 348.0 L661.0 345.2 M660.1 348.0 L658.0 356.0 M678.4 290.2 L677.2 293.7 M678.4 290.2 L684.1 290.5 M672.0 293.7 L670.0 295.9 M672.0 293.7 L677.2 293.7 M783.6 396.7 L777.3 399.6 M783.6 396.7 L777.3 384.2 M743.7 274.0 L741.9 275.4 M743.7 274.0 L746.1 275.8 M689.7 459.4 L693.1 457.1 M689.7 459.4 L695.3 453.9 M741.6 451.7 L739.2 447.0 M741.6 451.7 L741.2 457.2 M667.4 265.7 L674.5 267.6 M667.4 265.7 L673.7 269.6 M743.4 440.4 L746.7 442.1 M743.4 440.4 L747.6 444.6 M692.2 238.7 L691.9 238.8 M692.2 238.7 L697.6 237.3 M662.4 213.9 L664.8 219.9 M662.4 213.9 L666.4 221.2 M684.1 445.5 L688.3 445.3 M684.1 445.5 L679.4 445.5 M685.4 399.0 L684.0 398.0 M685.4 399.0 L687.1 400.3 M676.0 320.9 L680.2 318.8 M676.0 320.9 L680.7 318.9 M807.9 328.4 L819.7 326.6 M807.9 328.4 L800.2 318.2 M756.9 428.9 L755.1 430.4 M756.9 428.9 L757.6 432.1 M674.2 462.8 L677.3 460.2 M674.2 462.8 L667.2 460.4 M765.6 279.0 L764.2 283.7 M765.6 279.0 L767.2 272.3 M718.7 392.7 L724.3 392.1 M718.7 392.7 L714.4 388.1 M733.0 212.3 L732.6 214.2 M733.0 212.3 L730.1 215.1 M757.9 361.8 L763.9 365.0 M757.9 361.8 L765.0 367.0 M710.4 158.5 L709.5 164.7 M710.4 158.5 L699.6 162.7 M661.9 203.9 L656.0 204.4 M661.9 203.9 L665.5 197.9 M763.2 290.7 L768.3 294.2 M763.2 290.7 L764.2 283.7 M745.2 432.9 L747.4 426.7 M745.2 432.9 L751.6 429.2 M679.0 227.8 L677.5 226.5 M679.0 227.8 L678.5 234.0 M656.5 267.0 L659.1 259.8 M656.5 267.0 L656.2 275.2 M674.5 267.6 L673.7 269.6 M674.5 267.6 L679.2 268.7 M695.0 337.2 L692.7 336.5 M695.0 337.2 L697.9 338.0 M764.6 303.8 L766.0 300.2 M764.6 303.8 L767.6 297.3 M679.4 445.5 L684.1 445.5 M679.4 445.5 L674.6 443.2 M698.4 203.8 L696.7 200.8 M698.4 203.8 L700.5 208.1 M672.7 353.9 L674.0 352.7 M672.7 353.9 L675.1 353.4 M725.9 239.1 L729.1 237.0 M725.9 239.1 L723.3 235.1 M658.0 356.0 L660.1 348.0 M658.0 356.0 L662.8 363.1 M768.3 294.2 L767.6 297.3 M768.3 294.2 L763.2 290.7 M699.2 435.4 L697.6 436.6 M699.2 435.4 L696.3 433.6 M663.7 321.2 L662.6 324.8 M663.7 321.2 L661.9 327.6 M726.6 231.0 L729.3 228.2 M726.6 231.0 L723.3 235.1 M666.2 397.1 L666.3 393.8 M666.2 397.1 L662.9 397.2 M658.1 327.1 L658.6 327.3 M658.1 327.1 L661.9 327.6 M690.7 344.7 L692.9 349.1 M690.7 344.7 L692.7 336.5 M744.2 355.0 L745.1 354.3 M744.2 355.0 L743.6 351.3 M709.8 250.2 L710.3 251.6 M709.8 250.2 L713.6 255.3 M664.4 431.0 L660.4 426.4 M664.4 431.0 L667.5 424.4 M792.2 377.6 L792.1 376.9 M792.2 377.6 L790.7 372.9 M657.1 417.2 L657.1 416.1 M657.1 417.2 L663.6 414.4 M785.7 300.8 L785.1 296.9 M785.7 300.8 L786.5 304.8 M785.1 296.9 L783.4 296.4 M785.1 296.9 L785.7 300.8 M695.3 190.3 L689.5 185.8 M695.3 190.3 L690.3 196.9 M696.4 169.9 L695.5 168.5 M696.4 169.9 L696.0 167.6 M714.4 388.1 L718.7 392.7 M714.4 388.1 L707.8 384.9 M752.4 291.9 L752.4 293.2 M752.4 291.9 L756.9 298.1 M793.2 318.6 L790.4 313.9 M793.2 318.6 L800.2 318.2 M702.2 355.1 L710.5 350.9 M702.2 355.1 L692.9 349.1 M701.3 230.5 L699.1 233.3 M701.3 230.5 L705.1 232.4 M697.6 436.6 L699.2 435.4 M697.6 436.6 L696.3 433.6 M765.7 370.7 L766.7 372.5 M765.7 370.7 L765.0 367.0 M737.7 415.8 L742.1 414.2 M737.7 415.8 L743.8 414.3 M732.1 380.5 L726.4 385.5 M732.1 380.5 L729.2 372.4 M692.9 349.1 L690.7 344.7 M692.9 349.1 L690.1 353.9 M669.5 437.6 L674.6 443.2 M669.5 437.6 L664.4 431.0 M681.2 166.3 L678.8 162.4 M681.2 166.3 L675.5 168.6 M674.6 443.2 L679.4 445.5 M674.6 443.2 L668.6 446.1 M716.0 201.5 L716.3 204.9 M716.0 201.5 L712.3 204.3 M661.0 170.8 L663.3 164.9 M661.0 170.8 L662.1 177.2 M776.5 352.6 L779.0 353.2 M776.5 352.6 L781.0 350.0 M777.3 384.2 L771.2 385.8 M777.3 384.2 L768.6 392.8 M667.4 339.3 L673.6 334.4 M667.4 339.3 L661.0 345.2 M719.2 409.0 L718.1 410.2 M719.2 409.0 L716.4 413.4 M667.5 424.4 L667.6 422.9 M667.5 424.4 L670.6 420.9 M674.6 221.2 L674.6 221.4 M674.6 221.2 L676.7 216.2 M675.5 168.6 L681.2 166.3 M675.5 168.6 L678.8 162.4 M673.4 188.0 L670.9 189.4 M673.4 188.0 L668.2 185.8 M711.5 288.1 L714.8 287.1 M711.5 288.1 L718.1 285.8 M659.6 236.8 L656.9 239.1 M659.6 236.8 L660.9 243.8 M705.2 377.7 L701.6 378.0 M705.2 377.7 L707.8 384.9 M720.0 256.5 L721.1 259.8 M720.0 256.5 L716.6 258.3 M823.7 312.6 L819.7 317.4 M823.7 312.6 L819.5 319.8 M804.1 347.8 L811.2 350.6 M804.1 347.8 L796.9 352.7 M661.4 284.8 L658.3 286.5 M661.4 284.8 L656.7 286.6 M731.9 395.3 L728.8 390.4 M731.9 395.3 L724.3 392.1 M716.3 374.3 L705.2 377.7 M716.3 374.3 L723.1 363.3 M656.2 220.0 L664.8 219.9 M656.2 220.0 L662.4 213.9 M656.8 308.7 L656.6 309.0 M656.8 308.7 L664.6 303.4 M741.5 402.6 L738.6 409.5 M741.5 402.6 L748.7 397.2 M688.1 309.8 L691.0 313.0 M688.1 309.8 L682.4 308.1 M716.4 413.4 L715.6 413.5 M716.4 413.4 L718.1 410.2 M701.3 447.8 L705.7 445.2 M701.3 447.8 L701.8 453.3 M705.4 223.9 L710.3 220.4 M705.4 223.9 L708.9 229.5 M777.7 311.0 L776.7 311.6 M777.7 311.0 L786.5 304.8 M675.1 353.4 L674.0 352.7 M675.1 353.4 L672.7 353.9 M670.1 399.9 L666.2 397.1 M670.1 399.9 L666.3 393.8 M777.3 399.6 L783.6 396.7 M777.3 399.6 L769.9 401.1 M725.8 279.1 L724.3 280.5 M725.8 279.1 L720.8 278.6 M691.9 238.8 L692.2 238.7 M691.9 238.8 L697.6 237.3 M812.8 311.9 L809.8 303.9 M812.8 311.9 L811.9 303.3 M722.0 429.4 L718.4 429.4 M722.0 429.4 L724.0 425.5 M696.6 299.5 L696.7 303.9 M696.6 299.5 L696.6 306.9 M748.5 389.6 L748.4 385.8 M748.5 389.6 L747.4 394.6 M787.0 356.4 L787.0 355.9 M787.0 356.4 L786.6 359.9 M716.6 258.3 L720.0 256.5 M716.6 258.3 L713.6 255.3 M683.0 416.8 L680.4 413.2 M683.0 416.8 L681.4 411.7 M771.2 385.8 L777.3 384.2 M771.2 385.8 L768.6 392.8 M685.5 292.7 L684.1 290.5 M685.5 292.7 L683.4 294.9 M790.6 335.8 L789.0 333.9 M790.6 335.8 L794.4 326.2 M677.9 299.8 L677.2 293.7 M677.9 299.8 L683.4 294.9 M689.3 250.6 L690.1 255.8 M689.3 250.6 L681.4 245.0 M682.9 205.9 L685.1 207.6 M682.9 205.9 L678.1 204.4 M699.1 258.3 L699.9 264.6 M699.1 258.3 L690.1 255.8 M713.1 216.1 L710.3 220.4 M713.1 216.1 L719.3 218.5 M673.7 453.5 L677.3 460.2 M673.7 453.5 L668.6 446.1 M673.7 276.0 L671.6 280.6 M673.7 276.0 L673.7 269.6 M783.6 291.5 L783.4 296.4 M783.6 291.5 L779.5 295.2 M690.1 353.9 L692.9 349.1 M690.1 353.9 L687.9 358.9 M674.6 221.4 L674.6 221.2 M674.6 221.4 L676.7 216.2 M725.4 400.8 L727.5 407.2 M725.4 400.8 L731.9 395.3 M776.7 311.6 L777.7 311.0 M776.7 311.6 L786.5 304.8 M766.0 300.2 L767.6 297.3 M766.0 300.2 L764.6 303.8 M680.7 343.3 L687.4 336.6 M680.7 343.3 L690.7 344.7 M726.4 385.5 L728.8 390.4 M726.4 385.5 L724.3 392.1 M814.0 290.0 L814.8 294.1 M814.0 290.0 L806.7 295.9 M755.9 388.0 L753.7 391.3 M755.9 388.0 L748.5 389.6 M729.3 228.2 L726.6 231.0 M729.3 228.2 L723.5 226.6 M790.7 372.9 L794.2 372.6 M790.7 372.9 L792.1 376.9 M767.6 297.3 L768.3 294.2 M767.6 297.3 L766.0 300.2 M710.5 350.9 L717.4 354.1 M710.5 350.9 L702.2 355.1 M673.0 286.8 L678.4 290.2 M673.0 286.8 L671.6 280.6 M792.1 376.9 L792.2 377.6 M792.1 376.9 L790.7 372.9 M729.7 297.7 L725.6 294.9 M729.7 297.7 L733.7 292.6 M764.2 283.7 L765.6 279.0 M764.2 283.7 L763.2 290.7 M687.9 358.9 L690.1 353.9 M687.9 358.9 L692.6 368.1 M791.4 277.3 L786.4 284.7 M791.4 277.3 L800.0 281.9 M741.2 457.2 L744.1 457.3 M741.2 457.2 L741.6 451.7 M662.6 324.8 L661.9 327.6 M662.6 324.8 L663.7 321.2 M684.0 398.0 L685.4 399.0 M684.0 398.0 L685.1 395.0 M819.7 317.4 L819.5 319.8 M819.7 317.4 L823.7 312.6 M673.6 334.4 L674.5 330.0 M673.6 334.4 L667.4 339.3 M750.1 378.2 L755.3 373.0 M750.1 378.2 L748.4 385.8 M745.1 354.3 L744.2 355.0 M745.1 354.3 L743.6 351.3 M800.2 318.2 L798.7 314.2 M800.2 318.2 L793.2 318.6 M727.4 449.0 L725.8 448.7 M727.4 449.0 L721.0 451.5 M692.6 368.1 L690.3 370.7 M692.6 368.1 L684.5 371.5 M724.3 392.1 L728.8 390.4 M724.3 392.1 L718.7 392.7 M677.3 460.2 L674.2 462.8 M677.3 460.2 L673.7 453.5 M703.7 280.7 L704.4 285.5 M703.7 280.7 L701.1 286.6 M658.3 286.5 L656.7 286.6 M658.3 286.5 L661.4 284.8 M729.2 372.4 L732.1 380.5 M729.2 372.4 L723.1 363.3 M717.3 239.4 L715.6 239.3 M717.3 239.4 L715.0 241.6 M695.1 385.6 L694.5 391.5 M695.1 385.6 L690.3 389.1 M819.5 319.8 L819.7 317.4 M819.5 319.8 L819.7 326.6 M694.1 404.1 L687.1 400.3 M694.1 404.1 L696.7 396.3 M724.2 223.1 L723.5 226.6 M724.2 223.1 L719.3 218.5 M678.5 396.4 L684.0 398.0 M678.5 396.4 L685.1 395.0 M796.9 352.7 L796.7 358.6 M796.9 352.7 L804.1 347.8 M737.6 330.6 L737.4 330.7 M737.6 330.6 L735.6 327.3 M695.3 453.9 L698.5 454.5 M695.3 453.9 L694.2 450.4 M717.4 354.1 L710.5 350.9 M717.4 354.1 L723.1 363.3 M721.4 235.8 L723.3 235.1 M721.4 235.8 L717.3 239.4 M730.1 215.1 L732.6 214.2 M730.1 215.1 L733.0 212.3 M656.5 379.6 L661.6 375.8 M656.5 379.6 L656.3 388.5 M704.9 233.2 L705.1 232.4 M704.9 233.2 L703.2 234.3 M708.5 305.2 L708.5 299.4 M708.5 305.2 L707.0 299.1 M730.6 353.7 L730.1 360.3 M730.6 353.7 L738.5 361.9 M665.9 412.2 L663.6 414.4 M665.9 412.2 L670.7 416.3 M680.4 413.2 L681.4 411.7 M680.4 413.2 L683.0 416.8 M658.0 450.2 L660.0 450.0 M658.0 450.2 L668.6 446.1 M673.7 201.8 L675.0 205.4 M673.7 201.8 L678.1 204.4 M696.7 396.3 L701.2 396.8 M696.7 396.3 L694.5 391.5 M716.3 204.9 L716.0 201.5 M716.3 204.9 L712.3 204.3 M685.2 431.6 L682.7 429.4 M685.2 431.6 L692.2 436.1 M761.9 397.9 L768.6 392.8 M761.9 397.9 L769.9 401.1 M690.3 370.7 L692.6 368.1 M690.3 370.7 L684.5 371.5 M748.4 385.8 L748.5 389.6 M748.4 385.8 L753.7 391.3 M732.3 429.0 L731.5 425.6 M732.3 429.0 L726.7 429.0 M696.7 200.8 L698.4 203.8 M696.7 200.8 L702.6 197.7 M741.5 310.9 L738.6 312.3 M741.5 310.9 L744.8 306.8 M749.9 422.9 L747.4 426.7 M749.9 422.9 L751.6 429.2 M657.1 416.1 L657.1 417.2 M657.1 416.1 L663.6 414.4 M737.4 330.7 L737.6 330.6 M737.4 330.7 L735.6 327.3 M771.8 416.1 L769.6 403.5 M771.8 416.1 L769.9 401.1 M721.2 286.6 L718.1 285.8 M721.2 286.6 L718.8 289.4 M766.8 353.3 L759.7 348.3 M766.8 353.3 L776.5 352.6 M661.0 345.2 L660.1 348.0 M661.0 345.2 L667.4 339.3 M713.5 459.4 L712.7 458.9 M713.5 459.4 L709.5 450.6 M744.8 306.8 L741.5 310.9 M744.8 306.8 L745.9 300.7 M781.0 350.0 L779.0 353.2 M781.0 350.0 L776.5 352.6 M714.9 422.5 L711.0 416.0 M714.9 422.5 L718.4 429.4 M719.7 303.7 L717.6 298.7 M719.7 303.7 L725.3 307.6 M747.4 394.6 L748.7 397.2 M747.4 394.6 L748.5 389.6 M692.7 291.6 L694.9 286.0 M692.7 291.6 L696.8 286.0 M729.5 328.1 L724.8 326.9 M729.5 328.1 L735.6 327.3 M800.0 281.9 L798.5 290.7 M800.0 281.9 L799.0 290.8 M744.1 457.3 L741.2 457.2 M744.1 457.3 L747.9 458.4 M769.9 401.1 L769.6 403.5 M769.9 401.1 L777.3 399.6 M713.6 255.3 L716.6 258.3 M713.6 255.3 L710.3 251.6" fill="none" stroke="#fffefa" stroke-width="0.55" opacity=".9"/><path d="M511.3 443.7 L518.1 444.7 M511.3 443.7 L513.8 451.4 M580.1 454.3 L578.9 450.3 M580.1 454.3 L584.9 454.6 M458.2 451.0 L460.3 453.8 M458.2 451.0 L458.7 457.0 M631.5 441.5 L631.4 440.2 M631.5 441.5 L627.5 438.3 M638.9 444.9 L636.5 445.0 M638.9 444.9 L631.5 441.5 M584.9 454.6 L580.1 454.3 M584.9 454.6 L578.9 450.3 M636.5 445.0 L638.9 444.9 M636.5 445.0 L631.5 441.5 M576.4 445.8 L574.4 448.6 M576.4 445.8 L578.9 450.3 M592.8 444.2 L596.3 441.9 M592.8 444.2 L586.7 436.7 M589.6 423.5 L587.0 423.4 M589.6 423.5 L588.8 428.1 M586.7 436.7 L587.3 433.2 M586.7 436.7 L584.4 431.9 M606.3 417.5 L611.4 420.4 M606.3 417.5 L599.6 416.6 M608.8 461.4 L604.8 462.7 M608.8 461.4 L616.4 458.8 M584.4 431.9 L587.3 433.2 M584.4 431.9 L586.7 436.7 M618.6 454.5 L616.4 458.8 M618.6 454.5 L617.3 459.9 M565.2 425.9 L566.3 426.1 M565.2 425.9 L566.2 427.8 M581.6 462.4 L581.3 463.6 M581.6 462.4 L582.6 465.2 M616.1 443.1 L620.6 440.4 M616.1 443.1 L618.7 437.8 M638.3 436.1 L631.4 440.2 M638.3 436.1 L631.5 441.5 M571.4 462.6 L573.4 460.4 M571.4 462.6 L568.8 460.4 M651.1 437.7 L654.4 432.2 M651.1 437.7 L638.3 436.1 M582.1 423.5 L587.0 423.4 M582.1 423.5 L578.8 419.7 M451.0 448.9 L458.2 451.0 M451.0 448.9 L460.3 453.8 M474.9 464.2 L474.6 463.8 M474.9 464.2 L473.4 464.8 M468.1 459.0 L468.0 455.6 M468.1 459.0 L469.9 462.2 M597.5 425.1 L597.0 422.5 M597.5 425.1 L598.9 427.9 M600.4 422.1 L597.0 422.5 M600.4 422.1 L597.5 425.1 M460.3 453.8 L458.2 451.0 M460.3 453.8 L458.7 457.0 M596.3 458.2 L594.2 456.7 M596.3 458.2 L590.4 461.3 M599.6 416.6 L597.0 412.6 M599.6 416.6 L600.4 422.1 M578.9 450.3 L580.1 454.3 M578.9 450.3 L574.4 448.6 M544.4 462.3 L543.9 463.1 M544.4 462.3 L537.9 460.0 M502.1 464.1 L495.2 462.4 M502.1 464.1 L502.2 452.6 M597.0 412.6 L599.6 416.6 M597.0 412.6 L588.9 412.7 M617.6 416.3 L621.6 414.5 M617.6 416.3 L611.4 420.4 M513.8 451.4 L518.1 444.7 M513.8 451.4 L511.3 443.7 M484.0 458.5 L479.7 459.0 M484.0 458.5 L479.7 455.1 M549.7 415.2 L548.7 421.1 M549.7 415.2 L556.5 413.1 M525.4 443.0 L524.4 442.5 M525.4 443.0 L524.5 446.8 M539.9 448.6 L536.6 443.7 M539.9 448.6 L547.7 443.8 M479.7 455.1 L479.7 459.0 M479.7 455.1 L484.0 458.5 M524.5 446.8 L527.2 449.0 M524.5 446.8 L525.4 443.0 M579.1 434.6 L584.4 431.9 M579.1 434.6 L572.6 433.5 M529.1 454.5 L527.2 449.0 M529.1 454.5 L524.5 446.8 M643.7 454.4 L644.0 453.4 M643.7 454.4 L650.4 456.9 M566.2 427.8 L567.2 426.8 M566.2 427.8 L566.3 426.1 M462.4 464.6 L461.7 460.3 M462.4 464.6 L456.9 465.5 M594.2 456.7 L596.3 458.2 M594.2 456.7 L590.4 461.3 M518.1 444.7 L524.4 442.5 M518.1 444.7 L524.5 446.8 M650.4 456.9 L654.6 462.0 M650.4 456.9 L643.7 454.4 M573.2 428.7 L572.4 430.6 M573.2 428.7 L572.6 433.5 M537.9 460.0 L543.9 463.1 M537.9 460.0 L544.4 462.3 M527.2 449.0 L524.5 446.8 M527.2 449.0 L529.1 454.5 M573.4 460.4 L571.4 462.6 M573.4 460.4 L568.8 460.4 M615.5 427.3 L615.4 430.4 M615.5 427.3 L622.1 430.1 M536.6 443.7 L532.5 439.9 M536.6 443.7 L539.9 448.6 M617.3 459.9 L616.4 458.8 M617.3 459.9 L617.9 464.0 M458.7 457.0 L460.3 453.8 M458.7 457.0 L461.7 460.3 M616.4 458.8 L617.3 459.9 M616.4 458.8 L618.6 454.5 M567.2 426.8 L566.3 426.1 M567.2 426.8 L566.2 427.8 M624.5 455.6 L627.7 460.0 M624.5 455.6 L618.6 454.5 M590.4 461.3 L594.2 456.7 M590.4 461.3 L596.3 458.2 M563.5 455.1 L564.3 459.0 M563.5 455.1 L568.8 460.4 M491.1 452.5 L487.0 449.9 M491.1 452.5 L484.0 458.5 M641.0 424.6 L636.5 415.5 M641.0 424.6 L638.3 436.1 M574.4 448.6 L576.4 445.8 M574.4 448.6 L578.9 450.3 M545.4 423.2 L548.7 421.1 M545.4 423.2 L541.9 420.6 M502.2 452.6 L502.7 442.5 M502.2 452.6 L491.1 452.5 M612.3 436.8 L609.7 435.0 M612.3 436.8 L618.7 437.8 M468.0 455.6 L468.1 459.0 M468.0 455.6 L469.9 462.2 M608.3 424.6 L611.4 420.4 M608.3 424.6 L606.3 417.5 M568.8 460.4 L571.4 462.6 M568.8 460.4 L573.4 460.4 M631.4 440.2 L631.5 441.5 M631.4 440.2 L627.5 438.3 M547.7 443.8 L539.9 448.6 M547.7 443.8 L536.6 443.7 M487.0 449.9 L491.1 452.5 M487.0 449.9 L479.7 455.1 M524.4 442.5 L525.4 443.0 M524.4 442.5 L524.5 446.8 M532.5 439.9 L536.6 443.7 M532.5 439.9 L525.4 443.0 M654.4 432.2 L651.1 437.7 M654.4 432.2 L641.0 424.6 M611.4 420.4 L608.3 424.6 M611.4 420.4 L606.3 417.5 M572.4 430.6 L573.2 428.7 M572.4 430.6 L572.6 433.5 M556.5 413.1 L549.7 415.2 M556.5 413.1 L548.7 421.1 M456.9 465.5 L457.4 462.1 M456.9 465.5 L462.4 464.6 M627.5 438.3 L631.4 440.2 M627.5 438.3 L631.5 441.5 M566.3 426.1 L565.2 425.9 M566.3 426.1 L567.2 426.8 M609.7 435.0 L612.3 436.8 M609.7 435.0 L615.4 430.4 M644.0 453.4 L643.7 454.4 M644.0 453.4 L650.4 456.9 M617.9 464.0 L617.3 459.9 M617.9 464.0 L616.4 458.8 M564.3 459.0 L563.5 455.1 M564.3 459.0 L568.8 460.4 M543.9 463.1 L544.4 462.3 M543.9 463.1 L537.9 460.0 M636.5 415.5 L633.7 415.1 M636.5 415.5 L641.0 424.6 M572.6 433.5 L572.4 430.6 M572.6 433.5 L573.2 428.7 M474.6 463.8 L474.9 464.2 M474.6 463.8 L473.4 464.8 M502.7 442.5 L511.3 443.7 M502.7 442.5 L502.2 452.6 M581.3 463.6 L581.6 462.4 M581.3 463.6 L582.6 465.2 M587.3 433.2 L584.4 431.9 M587.3 433.2 L586.7 436.7 M541.9 420.6 L545.4 423.2 M541.9 420.6 L548.7 421.1 M648.0 465.6 L654.6 462.0 M648.0 465.6 L650.4 456.9 M635.1 460.8 L627.7 460.0 M635.1 460.8 L643.7 454.4 M621.6 414.5 L617.6 416.3 M621.6 414.5 L611.4 420.4 M611.2 450.3 L618.6 454.5 M611.2 450.3 L616.1 443.1 M582.6 465.2 L581.3 463.6 M582.6 465.2 L581.6 462.4 M604.8 462.7 L608.8 461.4 M604.8 462.7 L596.3 458.2 M588.8 428.1 L589.6 423.5 M588.8 428.1 L587.0 423.4 M571.3 452.9 L574.4 448.6 M571.3 452.9 L573.4 460.4 M548.7 421.1 L545.4 423.2 M548.7 421.1 L549.7 415.2 M588.9 412.7 L597.0 412.6 M588.9 412.7 L589.6 423.5 M597.0 422.5 L597.5 425.1 M597.0 422.5 L600.4 422.1 M457.4 462.1 L456.9 465.5 M457.4 462.1 L461.7 460.3 M495.2 462.4 L502.1 464.1 M495.2 462.4 L491.1 452.5 M627.7 460.0 L624.5 455.6 M627.7 460.0 L635.1 460.8 M469.9 462.2 L468.1 459.0 M469.9 462.2 L473.4 464.8 M622.7 445.9 L620.6 440.4 M622.7 445.9 L616.1 443.1 M542.7 430.3 L547.9 427.5 M542.7 430.3 L545.4 423.2 M618.7 437.8 L620.6 440.4 M618.7 437.8 L616.1 443.1 M578.8 419.7 L582.1 423.5 M578.8 419.7 L587.0 423.4 M596.3 441.9 L592.8 444.2 M596.3 441.9 L586.7 436.7 M479.7 459.0 L479.7 455.1 M479.7 459.0 L484.0 458.5 M622.1 430.1 L615.4 430.4 M622.1 430.1 L615.5 427.3 M515.2 460.8 L513.8 451.4 M515.2 460.8 L524.7 465.5 M473.4 464.8 L474.6 463.8 M473.4 464.8 L474.9 464.2 M461.7 460.3 L462.4 464.6 M461.7 460.3 L458.7 457.0 M587.0 423.4 L589.6 423.5 M587.0 423.4 L582.1 423.5 M547.9 427.5 L545.4 423.2 M547.9 427.5 L542.7 430.3 M524.7 465.5 L515.2 460.8 M524.7 465.5 L529.1 454.5 M654.6 462.0 L650.4 456.9 M654.6 462.0 L648.0 465.6 M633.7 415.1 L636.5 415.5 M633.7 415.1 L641.0 424.6 M598.9 427.9 L597.5 425.1 M598.9 427.9 L597.0 422.5 M650.6 412.9 L636.5 415.5 M650.6 412.9 L641.0 424.6 M615.4 430.4 L615.5 427.3 M615.4 430.4 L622.1 430.1 M620.6 440.4 L618.7 437.8 M620.6 440.4 L616.1 443.1" fill="none" stroke="#fffefa" stroke-width="0.6" opacity=".9"/><path d="M144.6 263.3 L159.8 260.2 M144.6 263.3 L153.2 282.0 M318.9 210.8 L306.8 215.7 M318.9 210.8 L309.3 222.4 M237.1 191.4 L228.1 193.9 M237.1 191.4 L239.6 179.3 M143.2 344.4 L144.7 359.3 M143.2 344.4 L148.3 329.9 M270.8 205.6 L267.8 205.2 M270.8 205.6 L260.3 205.6 M119.0 179.2 L129.7 189.8 M119.0 179.2 L138.1 174.2 M246.1 277.9 L247.1 271.5 M246.1 277.9 L238.4 284.5 M165.7 207.9 L169.2 216.9 M165.7 207.9 L174.5 216.6 M247.0 329.3 L236.8 315.4 M247.0 329.3 L251.2 304.0 M294.8 299.1 L302.1 299.9 M294.8 299.1 L301.5 305.6 M148.5 173.9 L143.8 182.8 M148.5 173.9 L138.1 174.2 M275.9 256.8 L264.5 252.3 M275.9 256.8 L282.3 273.0 M273.2 171.4 L268.6 182.9 M273.2 171.4 L252.8 168.2 M294.6 239.1 L286.5 239.9 M294.6 239.1 L309.3 222.4 M218.3 161.7 L229.0 163.0 M218.3 161.7 L227.4 174.8 M318.5 273.3 L309.1 264.5 M318.5 273.3 L313.2 259.9 M309.3 222.4 L306.8 215.7 M309.3 222.4 L318.9 210.8 M144.7 359.3 L143.2 344.4 M144.7 359.3 L160.1 355.8 M188.1 197.6 L197.4 191.1 M188.1 197.6 L167.1 187.5 M189.1 302.0 L185.9 301.9 M189.1 302.0 L192.0 299.7 M207.0 282.8 L203.9 280.2 M207.0 282.8 L210.6 290.6 M177.0 330.1 L173.6 325.1 M177.0 330.1 L184.6 321.4 M191.5 339.8 L198.7 348.6 M191.5 339.8 L205.6 336.0 M223.2 286.4 L224.2 283.2 M223.2 286.4 L222.8 280.2 M229.0 163.0 L218.3 161.7 M229.0 163.0 L227.4 174.8 M143.8 182.8 L148.5 173.9 M143.8 182.8 L138.1 174.2 M160.1 355.8 L170.9 344.9 M160.1 355.8 L144.7 359.3 M267.8 205.2 L270.8 205.6 M267.8 205.2 L260.3 205.6 M238.4 284.5 L235.6 278.4 M238.4 284.5 L233.6 276.9 M268.6 182.9 L273.2 171.4 M268.6 182.9 L279.2 197.8 M308.7 331.5 L314.7 325.0 M308.7 331.5 L288.4 329.5 M218.5 279.2 L222.8 280.2 M218.5 279.2 L224.2 283.2 M167.1 187.5 L165.7 207.9 M167.1 187.5 L148.5 173.9 M197.4 191.1 L188.1 197.6 M197.4 191.1 L223.0 184.7 M135.3 296.6 L153.2 282.0 M135.3 296.6 L144.6 263.3 M279.2 197.8 L270.8 205.6 M279.2 197.8 L267.8 205.2 M193.3 259.8 L208.5 268.8 M193.3 259.8 L203.9 280.2 M301.5 285.2 L297.1 283.3 M301.5 285.2 L302.1 299.9 M286.5 239.9 L294.6 239.1 M286.5 239.9 L273.5 228.9 M157.7 239.1 L144.2 231.6 M157.7 239.1 L141.0 235.0 M159.8 260.2 L170.5 256.4 M159.8 260.2 L164.4 270.9 M251.8 246.2 L245.8 249.9 M251.8 246.2 L264.5 252.3 M227.4 174.8 L223.0 184.7 M227.4 174.8 L229.0 163.0 M203.9 280.2 L207.0 282.8 M203.9 280.2 L208.5 268.8 M324.9 311.2 L314.7 325.0 M324.9 311.2 L301.5 305.6 M312.3 166.3 L309.0 159.0 M312.3 166.3 L319.5 188.8 M254.0 222.3 L249.1 218.6 M254.0 222.3 L262.8 224.2 M262.8 224.2 L254.0 222.3 M262.8 224.2 L273.5 228.9 M249.1 218.6 L254.0 222.3 M249.1 218.6 L262.8 224.2 M224.9 263.0 L219.9 265.5 M224.9 263.0 L237.3 259.1 M173.3 314.7 L173.6 325.1 M173.3 314.7 L184.6 321.4 M164.4 270.9 L159.8 260.2 M164.4 270.9 L170.5 256.4 M228.1 193.9 L237.1 191.4 M228.1 193.9 L223.0 184.7 M129.7 189.8 L119.0 179.2 M129.7 189.8 L143.8 182.8 M170.5 256.4 L159.8 260.2 M170.5 256.4 L164.4 270.9 M169.2 216.9 L174.5 216.6 M169.2 216.9 L165.7 207.9 M301.5 305.6 L302.1 299.9 M301.5 305.6 L294.8 299.1 M236.8 315.4 L247.0 329.3 M236.8 315.4 L251.2 304.0 M148.3 329.9 L143.2 344.4 M148.3 329.9 L173.6 325.1 M210.6 290.6 L207.0 282.8 M210.6 290.6 L203.9 280.2 M247.1 271.5 L246.1 277.9 M247.1 271.5 L235.6 278.4 M174.5 216.6 L169.2 216.9 M174.5 216.6 L165.7 207.9 M153.2 282.0 L164.4 270.9 M153.2 282.0 L144.6 263.3 M192.0 299.7 L189.1 302.0 M192.0 299.7 L185.9 301.9 M306.8 215.7 L309.3 222.4 M306.8 215.7 L318.9 210.8 M233.6 276.9 L235.6 278.4 M233.6 276.9 L238.4 284.5 M170.9 344.9 L160.1 355.8 M170.9 344.9 L177.0 330.1 M138.1 174.2 L143.8 182.8 M138.1 174.2 L148.5 173.9 M309.1 264.5 L313.2 259.9 M309.1 264.5 L318.5 273.3 M205.6 336.0 L198.7 348.6 M205.6 336.0 L191.5 339.8 M126.2 212.5 L137.5 228.2 M126.2 212.5 L145.1 202.1 M137.1 239.6 L141.0 235.0 M137.1 239.6 L144.2 231.6 M184.6 321.4 L177.0 330.1 M184.6 321.4 L173.6 325.1 M297.1 283.3 L301.5 285.2 M297.1 283.3 L294.8 299.1 M282.3 273.0 L275.9 256.8 M282.3 273.0 L297.1 283.3 M288.4 329.5 L308.7 331.5 M288.4 329.5 L314.7 325.0 M319.5 188.8 L318.9 210.8 M319.5 188.8 L312.3 166.3 M309.0 159.0 L312.3 166.3 M309.0 159.0 L319.5 188.8 M283.8 299.8 L294.8 299.1 M283.8 299.8 L302.1 299.9 M237.3 259.1 L245.8 249.9 M237.3 259.1 L224.9 263.0 M245.8 249.9 L251.8 246.2 M245.8 249.9 L237.3 259.1 M208.5 268.8 L219.9 265.5 M208.5 268.8 L203.9 280.2 M273.5 228.9 L262.8 224.2 M273.5 228.9 L286.5 239.9 M193.8 292.4 L196.2 293.8 M193.8 292.4 L192.0 299.7 M192.3 235.9 L193.3 259.8 M192.3 235.9 L174.5 216.6 M219.9 265.5 L224.9 263.0 M219.9 265.5 L208.5 268.8 M144.2 231.6 L141.0 235.0 M144.2 231.6 L137.5 228.2 M239.6 179.3 L237.1 191.4 M239.6 179.3 L227.4 174.8 M320.8 236.4 L309.3 222.4 M320.8 236.4 L313.2 259.9 M235.6 278.4 L233.6 276.9 M235.6 278.4 L238.4 284.5 M224.2 283.2 L222.8 280.2 M224.2 283.2 L223.2 286.4 M264.5 252.3 L275.9 256.8 M264.5 252.3 L251.8 246.2 M185.9 301.9 L189.1 302.0 M185.9 301.9 L192.0 299.7 M262.4 285.1 L246.1 277.9 M262.4 285.1 L247.1 271.5 M196.2 293.8 L193.8 292.4 M196.2 293.8 L192.0 299.7 M205.6 309.2 L192.0 299.7 M205.6 309.2 L196.2 293.8 M227.2 355.4 L205.6 336.0 M227.2 355.4 L198.7 348.6 M141.0 235.0 L144.2 231.6 M141.0 235.0 L137.1 239.6 M223.0 184.7 L228.1 193.9 M223.0 184.7 L227.4 174.8 M314.7 325.0 L308.7 331.5 M314.7 325.0 L324.9 311.2 M313.2 259.9 L309.1 264.5 M313.2 259.9 L318.5 273.3 M137.5 228.2 L144.2 231.6 M137.5 228.2 L141.0 235.0 M222.8 280.2 L224.2 283.2 M222.8 280.2 L218.5 279.2 M145.1 202.1 L143.8 182.8 M145.1 202.1 L129.7 189.8 M251.2 304.0 L236.8 315.4 M251.2 304.0 L262.4 285.1 M252.8 168.2 L239.6 179.3 M252.8 168.2 L273.2 171.4 M198.7 348.6 L191.5 339.8 M198.7 348.6 L205.6 336.0 M173.6 325.1 L177.0 330.1 M173.6 325.1 L173.3 314.7 M302.1 299.9 L301.5 305.6 M302.1 299.9 L294.8 299.1 M260.3 205.6 L267.8 205.2 M260.3 205.6 L270.8 205.6" fill="none" stroke="#fffefa" stroke-width="0.6" opacity=".6"/><ellipse cx="716" cy="405" rx="16" ry="9" fill="#fbfaf3" opacity=".8"/>
<path d="M890 447 L891.6 452 L890.6 456 L893 461 L892.6 467" fill="none" stroke="#5a6a95" stroke-width="0.9"/>
<g fill="none" stroke="#c2d3e6" stroke-width="0.6" opacity=".7"><path d="M881 325 L872 370 L842 395 L810 393 M842 395 L844 420 L830 440 L795 460 M939 395 L905 415 L882 428 L830 440 M882 428 L890 447"/></g>
</svg>
<svg width="939" height="312" viewBox="0 155 939 312" style="left:0;top:155px"><circle cx="139.8" cy="159.6" r="2.2" fill="#fff" opacity=".7"/><circle cx="139.8" cy="159.6" r="1.4" fill="#4c4c4c"/><circle cx="93.8" cy="199.2" r="2.2" fill="#fff" opacity=".7"/><circle cx="93.8" cy="199.2" r="1.4" fill="#4c4c4c"/><circle cx="155.3" cy="222.3" r="2.3" fill="#fff" opacity=".7"/><circle cx="155.3" cy="222.3" r="1.3" fill="#8c8c8c" stroke="#2e2e2e" stroke-width="1"/><circle cx="263.8" cy="194.9" r="2.2" fill="#fff" opacity=".7"/><circle cx="263.8" cy="194.9" r="1.4" fill="#4c4c4c"/><circle cx="331.9" cy="213.5" r="2.2" fill="#fff" opacity=".7"/><circle cx="331.9" cy="213.5" r="1.4" fill="#4c4c4c"/><circle cx="325.2" cy="220.3" r="2.2" fill="#fff" opacity=".7"/><circle cx="325.2" cy="220.3" r="1.4" fill="#4c4c4c"/><circle cx="266.4" cy="246.7" r="2.2" fill="#fff" opacity=".7"/><circle cx="266.4" cy="246.7" r="1.4" fill="#4c4c4c"/><circle cx="181.5" cy="286.1" r="2.3" fill="#fff" opacity=".7"/><circle cx="181.5" cy="286.1" r="1.3" fill="#8c8c8c" stroke="#2e2e2e" stroke-width="1"/><circle cx="269.4" cy="287.3" r="2.3" fill="#fff" opacity=".7"/><circle cx="269.4" cy="287.3" r="1.3" fill="#8c8c8c" stroke="#2e2e2e" stroke-width="1"/><circle cx="288.6" cy="313.9" r="2.2" fill="#fff" opacity=".7"/><circle cx="288.6" cy="313.9" r="1.4" fill="#4c4c4c"/><circle cx="278.3" cy="327.4" r="2.3" fill="#fff" opacity=".7"/><circle cx="278.3" cy="327.4" r="1.3" fill="#8c8c8c" stroke="#2e2e2e" stroke-width="1"/><circle cx="78.1" cy="339.9" r="2.2" fill="#fff" opacity=".7"/><circle cx="78.1" cy="339.9" r="1.4" fill="#4c4c4c"/><circle cx="126.6" cy="348.4" r="2.3" fill="#fff" opacity=".7"/><circle cx="126.6" cy="348.4" r="1.3" fill="#8c8c8c" stroke="#2e2e2e" stroke-width="1"/><circle cx="84.3" cy="372" r="2.3" fill="#fff" opacity=".7"/><circle cx="84.3" cy="372" r="1.3" fill="#8c8c8c" stroke="#2e2e2e" stroke-width="1"/><circle cx="191.8" cy="365" r="2.3" fill="#fff" opacity=".7"/><circle cx="191.8" cy="365" r="1.3" fill="#8c8c8c" stroke="#2e2e2e" stroke-width="1"/><circle cx="142" cy="400.4" r="2.3" fill="#fff" opacity=".7"/><circle cx="142" cy="400.4" r="1.3" fill="#8c8c8c" stroke="#2e2e2e" stroke-width="1"/><circle cx="707.2" cy="171.4" r="2.2" fill="#fff" opacity=".7"/><circle cx="707.2" cy="171.4" r="1.4" fill="#4c4c4c"/><circle cx="745.5" cy="214.3" r="2.3" fill="#fff" opacity=".7"/><circle cx="745.5" cy="214.3" r="1.3" fill="#8c8c8c" stroke="#2e2e2e" stroke-width="1"/><circle cx="655.6" cy="254.9" r="2.2" fill="#fff" opacity=".7"/><circle cx="655.6" cy="254.9" r="1.4" fill="#4c4c4c"/><circle cx="713.1" cy="294.6" r="2.2" fill="#fff" opacity=".7"/><circle cx="713.1" cy="294.6" r="1.4" fill="#4c4c4c"/><circle cx="736.2" cy="333.7" r="2.2" fill="#fff" opacity=".7"/><circle cx="736.2" cy="333.7" r="1.4" fill="#4c4c4c"/><circle cx="824.5" cy="274.2" r="2.2" fill="#fff" opacity=".7"/><circle cx="824.5" cy="274.2" r="1.4" fill="#4c4c4c"/><circle cx="810.4" cy="289.5" r="2.3" fill="#fff" opacity=".7"/><circle cx="810.4" cy="289.5" r="1.3" fill="#8c8c8c" stroke="#2e2e2e" stroke-width="1"/><circle cx="839.9" cy="305.1" r="2.3" fill="#fff" opacity=".7"/><circle cx="839.9" cy="305.1" r="1.3" fill="#8c8c8c" stroke="#2e2e2e" stroke-width="1"/><circle cx="758.6" cy="381.3" r="2.2" fill="#fff" opacity=".7"/><circle cx="758.6" cy="381.3" r="1.4" fill="#4c4c4c"/><circle cx="720.2" cy="404.3" r="2.3" fill="#fff" opacity=".7"/><circle cx="720.2" cy="404.3" r="1.3" fill="#8c8c8c" stroke="#2e2e2e" stroke-width="1"/><circle cx="822.4" cy="365" r="2.3" fill="#fff" opacity=".7"/><circle cx="822.4" cy="365" r="1.3" fill="#8c8c8c" stroke="#2e2e2e" stroke-width="1"/><circle cx="796.5" cy="427.7" r="2.3" fill="#fff" opacity=".7"/><circle cx="796.5" cy="427.7" r="1.3" fill="#8c8c8c" stroke="#2e2e2e" stroke-width="1"/><circle cx="811.3" cy="443" r="2.3" fill="#fff" opacity=".7"/><circle cx="811.3" cy="443" r="1.3" fill="#8c8c8c" stroke="#2e2e2e" stroke-width="1"/><circle cx="879.1" cy="452.5" r="2.2" fill="#fff" opacity=".7"/><circle cx="879.1" cy="452.5" r="1.4" fill="#4c4c4c"/><circle cx="847.6" cy="460.8" r="2.3" fill="#fff" opacity=".7"/><circle cx="847.6" cy="460.8" r="1.3" fill="#8c8c8c" stroke="#2e2e2e" stroke-width="1"/><circle cx="578.9" cy="417.3" r="2.2" fill="#fff" opacity=".7"/><circle cx="578.9" cy="417.3" r="1.4" fill="#4c4c4c"/><circle cx="444.6" cy="456.8" r="2.2" fill="#fff" opacity=".7"/><circle cx="444.6" cy="456.8" r="1.4" fill="#4c4c4c"/><circle cx="933" cy="435.2" r="2.3" fill="#fff" opacity=".7"/><circle cx="933" cy="435.2" r="1.3" fill="#8c8c8c" stroke="#2e2e2e" stroke-width="1"/></svg>
<div class="t" style="left:101.60px;top:156px;font-size:8.4px;color:#1e1e1e;transform:scaleX(0.9541);text-shadow:0 0 1px #fff,0 0 1px #fff,0 0 1.5px #fff,0 0 2px #fff;-webkit-text-stroke:0.3px #1e1e1e;">Castlebar</div>
<div class="t" style="left:64.60px;top:195px;font-size:8.4px;color:#1e1e1e;transform:scaleX(0.9817);text-shadow:0 0 1px #fff,0 0 1px #fff,0 0 1.5px #fff,0 0 2px #fff;-webkit-text-stroke:0.3px #1e1e1e;">Clifden</div>
<div class="t" style="left:159.20px;top:218px;font-size:8.8px;color:#1e1e1e;transform:scaleX(0.9951);text-shadow:0 0 1px #fff,0 0 1px #fff,0 0 1.5px #fff,0 0 2px #fff;-webkit-text-stroke:0.3px #1e1e1e;">Galway</div>
<div class="t" style="left:225.70px;top:191px;font-size:8.4px;color:#1e1e1e;transform:scaleX(0.9916);text-shadow:0 0 1px #fff,0 0 1px #fff,0 0 1.5px #fff,0 0 2px #fff;-webkit-text-stroke:0.3px #1e1e1e;">Mullingar</div>
<div class="t" style="left:212.50px;top:205px;font-size:11.1px;color:#2a2a2a;font-weight:700;transform:scaleX(1.1246);text-shadow:0 0 1px #fff,0 0 1px #fff,0 0 1.5px #fff,0 0 2px #fff;-webkit-text-stroke:0.3px #2a2a2a;">Republic</div>
<div class="t" style="left:208.80px;top:222px;font-size:11.1px;color:#2a2a2a;font-weight:700;transform:scaleX(1.1915);text-shadow:0 0 1px #fff,0 0 1px #fff,0 0 1.5px #fff,0 0 2px #fff;-webkit-text-stroke:0.3px #2a2a2a;">of Ireland</div>
<div class="t" style="left:316.20px;top:203px;font-size:9.3px;color:#2a2a2a;transform:scaleX(1.2216);text-shadow:0 0 1px #fff,0 0 1px #fff,0 0 1.5px #fff,0 0 2px #fff;-webkit-text-stroke:0.3px #2a2a2a;-webkit-text-stroke:0.35px #2a2a2a;">Dublin</div>
<div class="t" style="left:292.80px;top:216px;font-size:8.4px;color:#1e1e1e;text-shadow:0 0 1px #fff,0 0 1px #fff,0 0 1.5px #fff,0 0 2px #fff;-webkit-text-stroke:0.3px #1e1e1e;">Tallaght</div>
<div class="t" style="left:222.30px;top:242px;font-size:8.4px;color:#1e1e1e;transform:scaleX(0.9463);text-shadow:0 0 1px #fff,0 0 1px #fff,0 0 1.5px #fff,0 0 2px #fff;-webkit-text-stroke:0.3px #1e1e1e;">Port Laoise</div>
<div class="t" style="left:186.00px;top:282px;font-size:8.8px;color:#1e1e1e;transform:scaleX(1.0290);text-shadow:0 0 1px #fff,0 0 1px #fff,0 0 1.5px #fff,0 0 2px #fff;-webkit-text-stroke:0.3px #1e1e1e;">Limerick</div>
<div class="t" style="left:273.70px;top:283px;font-size:8.8px;color:#1e1e1e;transform:scaleX(1.0161);text-shadow:0 0 1px #fff,0 0 1px #fff,0 0 1.5px #fff,0 0 2px #fff;-webkit-text-stroke:0.3px #1e1e1e;">Kilkenny</div>
<div class="t" style="left:250.10px;top:309px;font-size:8.4px;color:#1e1e1e;transform:scaleX(0.9117);text-shadow:0 0 1px #fff,0 0 1px #fff,0 0 1.5px #fff,0 0 2px #fff;-webkit-text-stroke:0.3px #1e1e1e;">New Ross</div>
<div class="t" style="left:282.30px;top:323px;font-size:8.8px;color:#1e1e1e;transform:scaleX(1.0523);text-shadow:0 0 1px #fff,0 0 1px #fff,0 0 1.5px #fff,0 0 2px #fff;-webkit-text-stroke:0.3px #1e1e1e;">Waterford</div>
<div class="t" style="left:51.50px;top:336px;font-size:8.4px;color:#1e1e1e;transform:scaleX(0.9600);text-shadow:0 0 1px #fff,0 0 1px #fff,0 0 1.5px #fff,0 0 2px #fff;-webkit-text-stroke:0.3px #1e1e1e;">Dingle</div>
<div class="t" style="left:130.70px;top:344px;font-size:8.8px;color:#1e1e1e;transform:scaleX(1.0193);text-shadow:0 0 1px #fff,0 0 1px #fff,0 0 1.5px #fff,0 0 2px #fff;-webkit-text-stroke:0.3px #1e1e1e;">Killarney</div>
<div class="t" style="left:88.20px;top:368px;font-size:8.4px;color:#1e1e1e;transform:scaleX(1.0095);text-shadow:0 0 1px #fff,0 0 1px #fff,0 0 1.5px #fff,0 0 2px #fff;-webkit-text-stroke:0.3px #1e1e1e;">Waterville</div>
<div class="t" style="left:195.80px;top:361px;font-size:8.8px;color:#1e1e1e;transform:scaleX(0.9904);text-shadow:0 0 1px #fff,0 0 1px #fff,0 0 1.5px #fff,0 0 2px #fff;-webkit-text-stroke:0.3px #1e1e1e;">Cork</div>
<div class="t" style="left:145.60px;top:396px;font-size:8.4px;color:#1e1e1e;transform:scaleX(0.9652);text-shadow:0 0 1px #fff,0 0 1px #fff,0 0 1.5px #fff,0 0 2px #fff;-webkit-text-stroke:0.3px #1e1e1e;">Skibbereen</div>
<div class="t" style="left:710.90px;top:164px;font-size:8.4px;color:#1e1e1e;transform:scaleX(1.0677);text-shadow:0 0 1px #fff,0 0 1px #fff,0 0 1.5px #fff,0 0 2px #fff;-webkit-text-stroke:0.3px #1e1e1e;">Kingston</div>
<div class="t" style="left:710.90px;top:172px;font-size:8.4px;color:#1e1e1e;transform:scaleX(1.1020);text-shadow:0 0 1px #fff,0 0 1px #fff,0 0 1.5px #fff,0 0 2px #fff;-webkit-text-stroke:0.3px #1e1e1e;">upon Hull</div>
<div class="t" style="left:749.30px;top:211px;font-size:8.4px;color:#1e1e1e;transform:scaleX(1.0137);text-shadow:0 0 1px #fff,0 0 1px #fff,0 0 1.5px #fff,0 0 2px #fff;-webkit-text-stroke:0.3px #1e1e1e;">Mablethorpe</div>
<div class="t" style="left:659.90px;top:252px;font-size:8.8px;color:#1e1e1e;transform:scaleX(1.0600);text-shadow:0 0 1px #fff,0 0 1px #fff,0 0 1.5px #fff,0 0 2px #fff;-webkit-text-stroke:0.3px #1e1e1e;">Nottingham</div>
<div class="t" style="left:717.10px;top:291px;font-size:8.8px;color:#1e1e1e;transform:scaleX(1.0317);text-shadow:0 0 1px #fff,0 0 1px #fff,0 0 1.5px #fff,0 0 2px #fff;-webkit-text-stroke:0.3px #1e1e1e;">Peterborough</div>
<div class="t" style="left:740.30px;top:330px;font-size:8.8px;color:#1e1e1e;text-shadow:0 0 1px #fff,0 0 1px #fff,0 0 1.5px #fff,0 0 2px #fff;-webkit-text-stroke:0.3px #1e1e1e;">Cambridge</div>
<div class="t" style="left:790.90px;top:270px;font-size:8.4px;color:#1e1e1e;transform:scaleX(0.9696);text-shadow:0 0 1px #fff,0 0 1px #fff,0 0 1.5px #fff,0 0 2px #fff;-webkit-text-stroke:0.3px #1e1e1e;">Stalham</div>
<div class="t" style="left:814.30px;top:286px;font-size:8.8px;color:#1e1e1e;transform:scaleX(1.0446);text-shadow:0 0 1px #fff,0 0 1px #fff,0 0 1.5px #fff,0 0 2px #fff;-webkit-text-stroke:0.3px #1e1e1e;">Norwich</div>
<div class="t" style="left:843.90px;top:301px;font-size:8.4px;color:#1e1e1e;transform:scaleX(0.9956);text-shadow:0 0 1px #fff,0 0 1px #fff,0 0 1.5px #fff,0 0 2px #fff;-webkit-text-stroke:0.3px #1e1e1e;">Lowestoft</div>
<div class="t" style="left:653.60px;top:376px;font-size:8.8px;color:#1e1e1e;transform:scaleX(1.0073);text-shadow:0 0 1px #fff,0 0 1px #fff,0 0 1.5px #fff,0 0 2px #fff;-webkit-text-stroke:0.3px #1e1e1e;">Oxford</div>
<div class="t" style="left:712.70px;top:377px;font-size:8.4px;color:#1e1e1e;transform:scaleX(0.9877);text-shadow:0 0 1px #fff,0 0 1px #fff,0 0 1.5px #fff,0 0 2px #fff;-webkit-text-stroke:0.3px #1e1e1e;">Chelmsford</div>
<div class="t" style="left:680.20px;top:408px;font-size:10.2px;color:#2a2a2a;transform:scaleX(1.1000);text-shadow:0 0 1px #fff,0 0 1px #fff,0 0 1.5px #fff,0 0 2px #fff;-webkit-text-stroke:0.3px #2a2a2a;-webkit-text-stroke:0.3px #2a2a2a;">London</div>
<div class="t" style="left:826.70px;top:361px;font-size:8.4px;color:#1e1e1e;transform:scaleX(0.9236);text-shadow:0 0 1px #fff,0 0 1px #fff,0 0 1.5px #fff,0 0 2px #fff;-webkit-text-stroke:0.3px #1e1e1e;">Sealand</div>
<div class="t" style="left:800.90px;top:423px;font-size:8.4px;color:#1e1e1e;text-shadow:0 0 1px #fff,0 0 1px #fff,0 0 1.5px #fff,0 0 2px #fff;-webkit-text-stroke:0.3px #1e1e1e;">Canterbury</div>
<div class="t" style="left:815.90px;top:438px;font-size:8.8px;color:#1e1e1e;transform:scaleX(0.9587);text-shadow:0 0 1px #fff,0 0 1px #fff,0 0 1.5px #fff,0 0 2px #fff;-webkit-text-stroke:0.3px #1e1e1e;">Dover</div>
<div class="t" style="left:834.70px;top:448px;font-size:8.4px;color:#1e1e1e;transform:scaleX(0.9833);text-shadow:0 0 1px #fff,0 0 1px #fff,0 0 1.5px #fff,0 0 2px #fff;-webkit-text-stroke:0.3px #1e1e1e;">Dunkerque</div>
<div class="t" style="left:851.80px;top:456px;font-size:8.8px;color:#1e1e1e;transform:scaleX(0.9283);text-shadow:0 0 1px #fff,0 0 1px #fff,0 0 1.5px #fff,0 0 2px #fff;-webkit-text-stroke:0.3px #1e1e1e;">Calais</div>
<div class="t" style="left:582.70px;top:414px;font-size:8.4px;color:#1e1e1e;transform:scaleX(1.1083);text-shadow:0 0 1px #fff,0 0 1px #fff,0 0 1.5px #fff,0 0 2px #fff;-webkit-text-stroke:0.3px #1e1e1e;">Bath</div>
<div class="t" style="left:409.20px;top:453px;font-size:8.4px;color:#1e1e1e;transform:scaleX(1.0109);text-shadow:0 0 1px #fff,0 0 1px #fff,0 0 1.5px #fff,0 0 2px #fff;-webkit-text-stroke:0.3px #1e1e1e;">Hartland</div>
<div class="t" style="left:933.00px;top:349px;font-size:8.4px;color:#1e1e1e;transform:scaleX(0.9326);text-shadow:0 0 1px #fff,0 0 1px #fff,0 0 1.5px #fff,0 0 2px #fff;-webkit-text-stroke:0.3px #1e1e1e;">&#x27;s-</div>
<div class="t" style="left:935.90px;top:431px;font-size:8.4px;color:#1e1e1e;transform:scaleX(1.3254);text-shadow:0 0 1px #fff,0 0 1px #fff,0 0 1.5px #fff,0 0 2px #fff;-webkit-text-stroke:0.3px #1e1e1e;">Br</div>
<div class="t" style="left:653.20px;top:162px;font-size:8.4px;color:#1e1e1e;transform:scaleX(1.0269);text-shadow:0 0 1px #fff,0 0 1px #fff,0 0 1.5px #fff,0 0 2px #fff;-webkit-text-stroke:0.3px #1e1e1e;">s</div>
<div class="t" style="left:652.40px;top:289px;font-size:8.4px;color:#1e1e1e;transform:scaleX(1.0488);text-shadow:0 0 1px #fff,0 0 1px #fff,0 0 1.5px #fff,0 0 2px #fff;-webkit-text-stroke:0.3px #1e1e1e;">n</div>
<div class="t" style="left:531.80px;top:404px;font-size:8.4px;color:#333;transform:scaleX(1.0157);text-shadow:0 0 1px #fff,0 0 1px #fff,0 0 1.5px #fff,0 0 2px #fff;-webkit-text-stroke:0.3px #333;">Cardiff</div>
<div class="t" style="left:656.90px;top:310px;font-size:12.2px;color:#7c7c82;transform:scaleX(0.9744);text-shadow:0 0 1px #fff,0 0 1px #fff,0 0 1.5px #fff,0 0 2px #fff;letter-spacing:2.2px;">England</div>
<div class="t" style="left:0.00px;top:-9px;font-size:10.5px;color:#d8e4f1;font-style:italic;letter-spacing:2.6px;left:372px;top:448px;transform-origin:0 100%;transform:rotate(-17.5deg);">Bristol Channel</div>
<div class="a" style="left:123.1px;top:266.4px;width:14.3px;height:8px;background:#fff;border:0.7px solid #b8b8b8;border-radius:1px"></div>
<div class="a" style="left:680.4px;top:215.1px;width:19.8px;height:8px;background:#fff;border:0.7px solid #b8b8b8;border-radius:1px"></div><div class="t" style="left:125.20px;top:268px;font-size:6.6px;color:#555;transform:scaleX(0.8423);">N67</div><div class="t" style="left:682.20px;top:217px;font-size:6.6px;color:#555;transform:scaleX(0.8491);">A1500</div>
<div class="a" style="left:7.3px;top:162.4px;width:23.4px;height:43.8px;background:#fff;border:1.3px solid #b4b8bd;border-radius:3px"></div>
<div class="a" style="left:9px;top:183.6px;width:20px;height:1px;background:#dcdcdc"></div>
<svg width="24" height="44" viewBox="7 162 24 44" style="left:7px;top:162px"><path d="M14.8 173.9 H23.2 M19 169.7 V178.1" stroke="#111" stroke-width="1.7"/><path d="M15 194.6 H23.2" stroke="#111" stroke-width="1.6"/></svg>

<div class="a" style="left:0;top:119px;width:939px;height:36px;background:#fafafa;box-shadow:0 1px 2.5px rgba(0,0,0,.22)"></div>
<div class="a" style="left:0;top:65px;width:939px;height:54.4px;background:#fff;box-shadow:0 1px 2px rgba(0,0,0,.12)"></div>
<svg width="939" height="100" viewBox="0 60 939 100" style="left:0;top:60px">
<rect x="16.4" y="138.2" width="12.6" height="1.3" fill="#fff"/><rect x="16.4" y="142" width="12.6" height="1.3" fill="#fff"/><rect x="16.4" y="145.8" width="12.6" height="1.3" fill="#fff"/>
<!-- oxford logo -->
<rect x="11" y="76" width="109" height="33.2" fill="#002147"/>
<g fill="none" stroke="#d5dce8">
<circle cx="28" cy="90.2" r="11.5" stroke-width="1"/>
<circle cx="28" cy="90.2" r="7.9" stroke-width="0.8"/>
<circle cx="28" cy="90.2" r="9.7" stroke-width="1.9" stroke-dasharray="1.1 0.8" stroke="#8496b3"/>
<path d="M26.4 101.6 V105.4 A1.6 1.6 0 0 0 29.6 105.4 V101.6" stroke-width="1"/>
</g>
<rect x="22.9" y="86.8" width="10.2" height="7.2" rx="0.7" fill="#dfe5ef"/>
<path d="M28 86.8 V94 M24.6 88.3 V92.5 M26.2 88.3 V92.5 M29.8 88.3 V92.5 M31.4 88.3 V92.5" stroke="#002147" stroke-width="0.6"/>
<path d="M24.2 84.6 h1.8 M30 84.6 h1.8 M27.1 96.2 h1.8" stroke="#dfe5ef" stroke-width="1.3"/>
<!-- gear -->
<g transform="translate(910.15 93)" fill="#0b2350">
<g id="teeth"><rect x="-2.1" y="-7.2" width="4.2" height="14.4" rx="0.7"/></g>
<use href="#teeth" transform="rotate(60)"/><use href="#teeth" transform="rotate(120)"/>
<circle r="5.4"/><circle r="2.45" fill="#fff"/>
</g>
<!-- info -->
<circle cx="935.4" cy="93.4" r="7.4" fill="#0b2350"/>
<rect x="933.9" y="91.8" width="3.2" height="5.6" fill="#fff"/><rect x="932.8" y="91.8" width="3" height="1.4" fill="#fff"/><rect x="932.6" y="96.4" width="6" height="1.5" fill="#fff"/>
<circle cx="935.6" cy="88.9" r="1.55" fill="#fff"/>
<!-- pencil -->
<g transform="translate(927.9 144.9) rotate(-50.5)" fill="#0b2350">
<path d="M0 0 L3.8 -3.1 V3.1 Z"/><rect x="5" y="-3.3" width="15" height="6.6"/><rect x="3.9" y="-2.6" width="1" height="5.2" fill="#fafafa"/><rect x="5.4" y="-1.2" width="14" height="0.8" fill="#fafafa" opacity=".45"/>
</g>
</svg>
<div class="t" style="left:44.80px;top:82px;font-size:7.4px;color:#e3e8f0;transform:scaleX(0.8671);letter-spacing:0.45px;">UNIVERSITY OF</div>
<div class="t" style="left:44.40px;top:90px;font-size:16.2px;color:#ffffff;font-family:'Liberation Serif',serif;transform:scaleX(1.0096);">OXFORD</div>
<div class="t" style="left:131.60px;top:84px;font-size:22.2px;color:#0b2350;transform:scaleX(0.9720);-webkit-text-stroke:0.25px #0b2350;">Virtual Environment Sampling Platform</div>
<!-- dropdown -->
<div class="a" style="left:343px;top:120px;width:312px;height:289.5px;background:#fff;border-radius:1.5px;box-shadow:0 1px 2.5px rgba(0,0,0,.32)"></div>
<div class="t" style="left:360.40px;top:137px;font-size:11px;color:#454545;transform:scaleX(0.9421);">Markos meadow 001</div><div class="t" style="left:360.40px;top:160px;font-size:11px;color:#454545;transform:scaleX(0.9222);">Ecology and Field Biology - Sample Data</div><div class="t" style="left:360.40px;top:182px;font-size:11px;color:#ff4081;transform:scaleX(0.9175);">Earth Sciences - Geology Wales</div><div class="t" style="left:360.40px;top:204px;font-size:11px;color:#454545;transform:scaleX(0.9250);">Medical Sciences - Malaria GHO</div><div class="t" style="left:360.40px;top:226px;font-size:11px;color:#454545;transform:scaleX(0.9136);">Earth Sciences - Geology NI</div><div class="t" style="left:360.40px;top:249px;font-size:11px;color:#454545;transform:scaleX(0.9443);">Magdalen Meadow - Butterflies</div><div class="t" style="left:360.40px;top:271px;font-size:11px;color:#454545;transform:scaleX(0.9385);">Magdalen Meadow - Plants</div><div class="t" style="left:360.40px;top:293px;font-size:11px;color:#454545;transform:scaleX(0.9428);">Magdalen Meadow - Soil Moisture</div><div class="t" style="left:360.40px;top:315px;font-size:11px;color:#454545;transform:scaleX(0.9369);">Archaeology</div><div class="t" style="left:360.40px;top:338px;font-size:11px;color:#454545;transform:scaleX(0.9310);">Medical Sciences - Malaria IHME CPD p/Age</div><div class="t" style="left:360.40px;top:360px;font-size:11px;color:#454545;transform:scaleX(0.9093);">Geography</div><div class="t" style="left:387.70px;top:382px;font-size:11px;color:#454545;transform:scaleX(0.9454);">New data set</div>
<svg width="16" height="16" viewBox="0 0 16 16" style="left:360.1px;top:379.7px"><circle cx="8" cy="8" r="6.9" fill="#0b2350"/><rect x="3.9" y="6.9" width="8.2" height="2.2" fill="#fff"/><rect x="6.9" y="3.9" width="2.2" height="8.2" fill="#fff"/></svg>
<!-- bottom bar -->
<div class="a" style="left:0;top:467px;width:939px;height:37px;background:#fff"></div>
<svg width="939" height="37" viewBox="0 467 939 37" style="left:0;top:467px">
<g fill="#dcdcdc"><rect x="133.4" y="476" width="1" height="21.5"/><rect x="270.6" y="476" width="1" height="21.5"/><rect x="380.8" y="476" width="1" height="21.5"/><rect x="532.2" y="476" width="1" height="21.5"/><rect x="653" y="476" width="1" height="21.5"/></g>
<path d="M234.2 488 L237.4 484.6 L240.6 488 Z" fill="#2b2b2b"/>
<path d="M345.2 488 L348.4 484.6 L351.6 488 Z" fill="#cfcfcf"/>
<path d="M617.4 488 L620.6 484.6 L623.8 488 Z" fill="#2b2b2b"/>
<!-- locate -->
<circle cx="398.9" cy="486.5" r="5.3" fill="none" stroke="#0c0c0c" stroke-width="1.7"/><circle cx="398.9" cy="486.5" r="2.7" fill="#0c0c0c"/>
<path d="M398.9 478.9 V481.4 M398.9 491.6 V494.1 M391.3 486.5 H393.8 M404 486.5 H406.5" stroke="#0c0c0c" stroke-width="1.7"/>
<rect x="426.8" y="481.4" width="10.6" height="10.6" rx="0.8" fill="none" stroke="#a6a6a6" stroke-width="1.2"/>
<rect x="460.8" y="485.9" width="10" height="1.3" fill="#b9b9b9"/>
<path d="M494.4 487.6 Q500.4 482 506 489.6" fill="none" stroke="#b0b0b0" stroke-width="1.8"/><path d="M492.2 483.8 V489.8 H498.2 Z" fill="#b0b0b0"/>
</svg>
<div class="t" style="left:145.50px;top:482px;font-size:10px;color:#3a3a3a;transform:scaleX(0.9158);">POINT SAMPLING</div>
<div class="t" style="left:282.80px;top:482px;font-size:10px;color:#cdcdcd;transform:scaleX(0.9389);">3KM X 3KM</div>
<div class="t" style="left:544.40px;top:482px;font-size:10px;color:#3a3a3a;transform:scaleX(0.9124);">RESULTS 0/20</div>
<div class="t" style="left:665.50px;top:482px;font-size:10px;color:#3a3a3a;transform:scaleX(0.8622);">LOAD RESULTS</div>
<div class="t" style="left:753.40px;top:482px;font-size:10px;color:#3a3a3a;transform:scaleX(0.8619);">RESET RESULTS</div>

<svg width="939" height="66" viewBox="0 0 939 66" style="left:0;top:0">
<rect x="0" y="0" width="939" height="21" fill="#cbcbcb"/>
<rect x="0" y="0" width="939" height="1" fill="#c4c4c4"/>
<rect x="0" y="20" width="939" height="45" fill="#f2f2f2"/>
<rect x="0" y="19.5" width="939" height="1" fill="#b4b4b4"/>
<!-- new tab button -->
<path d="M146.5 5.5 L164.5 5.5 L169.5 16.5 L151.5 16.5 Z" fill="#d4d4d4" stroke="#a9a9a9" stroke-width="1"/>
<!-- active tab -->
<path d="M3.5 20.5 L12.8 1.2 Q13.3 0.5 14.4 0.5 L136.4 0.5 Q137.5 0.5 138 1.2 L147.6 20.5 Z" fill="#f2f2f2" stroke="#a8a8a8" stroke-width="1"/>
<rect x="4.2" y="20" width="143.2" height="1.2" fill="#f2f2f2"/>
<!-- favicon -->
<rect x="14" y="5" width="11" height="11" fill="#0b2250"/>
<circle cx="19.5" cy="10" r="3.4" fill="none" stroke="#e8ecf4" stroke-width="1.1"/>
<rect x="18" y="8.6" width="3" height="2.6" fill="#e8ecf4"/>
<rect x="19" y="13" width="1" height="2" fill="#e8ecf4"/>
<!-- tab close -->
<path d="M129 8.2 L133.8 13 M133.8 8.2 L129 13" stroke="#3c3c3c" stroke-width="1.2" fill="none"/>
<!-- window controls -->
<circle cx="839" cy="8.6" r="4.3" fill="#5f5f5f"/>
<circle cx="839" cy="7.2" r="1.5" fill="#c9c9c9"/>
<path d="M836.2 11 Q839 8.6 841.8 11 L841 12.2 L837 12.2 Z" fill="#c9c9c9"/>
<rect x="866.5" y="9" width="7" height="1.1" fill="#2b2b2b"/>
<rect x="899.5" y="6.5" width="5.6" height="5.6" fill="none" stroke="#2b2b2b" stroke-width="1"/>
<path d="M901.2 6.2 V4.8 H906.8 V10.4 H905.4" fill="none" stroke="#2b2b2b" stroke-width="1"/>
<path d="M931.2 5.2 L938.4 12.4 M938.4 5.2 L931.2 12.4" stroke="#2b2b2b" stroke-width="1.1" fill="none"/>
<!-- nav buttons -->
<path d="M17.6 33 H8.8 M12.6 28.8 L8.4 33 L12.6 37.2" stroke="#4f4f4f" stroke-width="1.25" fill="none"/>
<path d="M27.2 33 H36 M32.2 28.8 L36.4 33 L32.2 37.2" stroke="#c6c6c6" stroke-width="1.25" fill="none"/>
<path d="M55.4 30.6 A4.4 4.4 0 1 0 56 34.8" stroke="#4f4f4f" stroke-width="1.3" fill="none"/>
<path d="M56.8 28.2 V32.2 H52.8 Z" fill="#4f4f4f"/>
<!-- url box -->
<rect x="64.5" y="23.5" width="798" height="18.9" rx="2" fill="#ffffff" stroke="#b3b3b3" stroke-width="1"/>
<!-- lock -->
<rect x="70.8" y="31" width="6.4" height="5" rx="0.6" fill="#188038"/>
<path d="M72.3 31.2 V29.8 A1.7 1.7 0 0 1 75.7 29.8 V31.2" fill="none" stroke="#188038" stroke-width="1.2"/>
<rect x="118.2" y="27" width="1" height="12" fill="#d0d0d0"/>
<!-- star -->
<path d="M852 28 L853.35 31.2 L856.8 31.5 L854.2 33.75 L855 37.1 L852 35.3 L849 37.1 L849.8 33.75 L847.2 31.5 L850.65 31.2 Z" fill="none" stroke="#4a4a4a" stroke-width="1.1" stroke-linejoin="round"/>
<!-- extension icons -->
<rect x="867.6" y="28" width="9.8" height="9.8" fill="#c4c4c4"/>
<path d="M870 35.5 Q872 32 872.2 29.8 Q873 33.5 875.6 34.6 Q872.5 34.2 870 35.5" fill="none" stroke="#f0f0f0" stroke-width="0.9"/>
<circle cx="895.3" cy="32.2" r="4.3" fill="#18a8ea"/>
<path d="M890.6 35.2 Q895.3 40 900.2 35" fill="none" stroke="#f59b23" stroke-width="1.3"/>
<text x="895.3" y="34.6" font-family="Liberation Sans, sans-serif" font-size="6.6" font-weight="700" fill="#fff" text-anchor="middle">S</text>
<circle cx="916" cy="31.2" r="3.2" fill="#c9c9c9"/><circle cx="918.8" cy="34" r="3.2" fill="#c9c9c9"/><circle cx="917.4" cy="32.6" r="4" fill="#c9c9c9"/>
<text x="917.4" y="35" font-family="Liberation Sans, sans-serif" font-size="6.6" font-weight="700" fill="#f2f2f2" text-anchor="middle">S</text>
<circle cx="937.6" cy="29.4" r="0.9" fill="#555"/><circle cx="937.6" cy="32.6" r="0.9" fill="#555"/><circle cx="937.6" cy="35.8" r="0.9" fill="#555"/>
<!-- bookmarks bar icons -->
<g>
<rect x="7.8" y="49.6" width="2.3" height="2.3" fill="#ea4335"/><rect x="11.2" y="49.6" width="2.3" height="2.3" fill="#ea4335"/><rect x="14.6" y="49.6" width="2.3" height="2.3" fill="#ea4335"/>
<rect x="7.8" y="53" width="2.3" height="2.3" fill="#34a853"/><rect x="11.2" y="53" width="2.3" height="2.3" fill="#4285f4"/><rect x="14.6" y="53" width="2.3" height="2.3" fill="#fbbc05"/>
<rect x="7.8" y="56.4" width="2.3" height="2.3" fill="#34a853"/><rect x="11.2" y="56.4" width="2.3" height="2.3" fill="#fbbc05"/><rect x="14.6" y="56.4" width="2.3" height="2.3" fill="#fbbc05"/>
</g>
<path d="M56.5 49.8 H60.3 L62.6 52.2 V58.8 H56.5 Z M60.2 49.9 V52.3 H62.5" fill="#fff" stroke="#6a6a6a" stroke-width="0.9"/>
<!-- VESPA favicons -->
<g id="vf"><rect x="139" y="48.6" width="11" height="11" fill="#0b2250"/><circle cx="144.5" cy="53.6" r="3.4" fill="none" stroke="#e8ecf4" stroke-width="1.1"/><rect x="143" y="52.2" width="3" height="2.6" fill="#e8ecf4"/><rect x="144" y="56.6" width="1" height="2" fill="#e8ecf4"/></g>
<use href="#vf" x="113.5" y="0"/>
<!-- my maps -->
<rect x="190.4" y="48.6" width="11" height="11" rx="1.2" fill="#db4437"/>
<path d="M195.9 50.6 A2.6 2.6 0 0 1 198.5 53.2 Q198.5 55 195.9 58 Q193.3 55 193.3 53.2 A2.6 2.6 0 0 1 195.9 50.6 Z" fill="#fff"/><circle cx="195.9" cy="53.2" r="1" fill="#db4437"/>
<!-- danny dorling -->
<text x="338.5" y="53.6" font-family="Liberation Sans, sans-serif" font-size="5" font-weight="700" fill="#c9504e">TP</text>
<text x="342" y="58.8" font-family="Liberation Sans, sans-serif" font-size="5.4" font-weight="700" fill="#b5322f">UK</text>
<!-- sf -->
<text x="417.8" y="59.4" font-family="Liberation Sans, sans-serif" font-size="14" font-weight="700" fill="#1e8fd0" textLength="7" lengthAdjust="spacingAndGlyphs">s</text>
<text x="425.6" y="59.4" font-family="Liberation Sans, sans-serif" font-size="14" font-weight="700" fill="#1a1a1a" textLength="5.4" lengthAdjust="spacingAndGlyphs">f</text>
<!-- unesco white -->
<rect x="525.6" y="49.6" width="7.4" height="8.6" fill="#ffffff"/>
<!-- UN jobs -->
<rect x="602.4" y="48.8" width="10.6" height="10.6" fill="#2f8ae0"/>
<text x="603.2" y="53.4" font-family="Liberation Sans, sans-serif" font-size="4.6" font-weight="700" fill="#fff">UN|</text>
<text x="603" y="58.2" font-family="Liberation Sans, sans-serif" font-size="4.4" font-weight="700" fill="#fff">jobs</text>
<!-- UNPC -->
<rect x="669" y="48.6" width="11.4" height="11" fill="#1f5fae"/>
<circle cx="674.7" cy="54.1" r="3.6" fill="none" stroke="#cfe0f5" stroke-width="0.9"/><circle cx="674.7" cy="54.1" r="1.5" fill="none" stroke="#cfe0f5" stroke-width="0.7"/>
<!-- WWF panda -->
<ellipse cx="743.6" cy="54.6" rx="4.4" ry="4.6" fill="#f6f6f6" stroke="#2a2a2a" stroke-width="0.8"/>
<circle cx="740.3" cy="50.6" r="1.5" fill="#1e1e1e"/><circle cx="746.6" cy="50.2" r="1.5" fill="#1e1e1e"/>
<ellipse cx="742" cy="53.6" rx="1" ry="1.3" fill="#1e1e1e"/><ellipse cx="745.4" cy="53.4" rx="1" ry="1.3" fill="#1e1e1e"/>
<path d="M739.6 57 Q741 59.6 743 58.2 L742.6 56 Z M745 56 L744.8 59 Q747.4 59 747.6 56.6 Z" fill="#1e1e1e"/>
<!-- conservation -->
<rect x="815.6" y="48.8" width="8" height="10.6" fill="#ecead8"/>
<path d="M819.6 50 V57" stroke="#b98a78" stroke-width="0.9"/><path d="M817.2 52.4 H822 M817.6 50.6 L821.6 54.2" stroke="#9fb86a" stroke-width="0.9"/>
<rect x="816.6" y="57.6" width="6" height="1" fill="#c9a" />
<!-- chevrons -->
<path d="M932.8 52.2 L934.6 54.2 L932.8 56.2 M935.2 52.2 L937 54.2 L935.2 56.2" fill="none" stroke="#444" stroke-width="0.9"/>
<rect x="0" y="64" width="939" height="1" fill="#b6b6b6"/>
</svg>
<div class="t" style="left:29.80px;top:7px;font-size:8.8px;color:#2f2f2f;transform:scaleX(0.9332);">Home</div>
<div class="t" style="left:82.70px;top:28px;font-size:9.8px;color:#2b8a43;transform:scaleX(0.9115);">Secure</div>
<div class="t" style="left:124.60px;top:28px;font-size:9.8px;color:#262626;"><span style="color:#2b8a43">https</span><span style="color:#7a7a7a">://</span>vespa.itchallenge.ox.ac.uk<span style="color:#808080">/#/dataset/Wales-geology-dataset</span></div>
<div class="t" style="left:26.80px;top:50px;font-size:8.7px;color:#3a3a3a;transform:scaleX(0.9287);">Apps</div>
<div class="t" style="left:73.30px;top:50px;font-size:8.7px;color:#3a3a3a;transform:scaleX(0.9757);">Oxford Mailbox</div>
<div class="t" style="left:158.50px;top:50px;font-size:8.7px;color:#3a3a3a;transform:scaleX(0.8366);">VESPA</div>
<div class="t" style="left:210.20px;top:50px;font-size:8.7px;color:#3a3a3a;transform:scaleX(0.9674);">My Maps</div>
<div class="t" style="left:271.80px;top:50px;font-size:8.7px;color:#3a3a3a;transform:scaleX(0.9857);">virtual meadow</div>
<div class="t" style="left:356.60px;top:50px;font-size:8.7px;color:#3a3a3a;transform:scaleX(0.9771);">Danny Dorling</div>
<div class="t" style="left:543.50px;top:50px;font-size:8.7px;color:#3a3a3a;transform:scaleX(0.8630);">UNESCO Jobs</div>
<div class="t" style="left:621.50px;top:50px;font-size:8.7px;color:#3a3a3a;transform:scaleX(0.9092);">UNEP jobs</div>
<div class="t" style="left:688.50px;top:50px;font-size:8.7px;color:#3a3a3a;transform:scaleX(0.8923);">UNPC Jobs</div>
<div class="t" style="left:757.00px;top:50px;font-size:8.7px;color:#3a3a3a;transform:scaleX(0.9206);">Jobs at WWF</div>
<div class="t" style="left:438.40px;top:50px;font-size:8.7px;color:#3a3a3a;transform:scaleX(0.8902);-webkit-mask-image:linear-gradient(90deg,#000 80%,transparent 100%);mask-image:linear-gradient(90deg,#000 80%,transparent 100%);">Greenpeace Career C</div>
<div class="t" style="left:833.00px;top:50px;font-size:8.7px;color:#3a3a3a;transform:scaleX(0.9419);-webkit-mask-image:linear-gradient(90deg,#000 82%,transparent 100%);mask-image:linear-gradient(90deg,#000 82%,transparent 100%);">Conservation Career</div>
</div>
</body>
</html>
